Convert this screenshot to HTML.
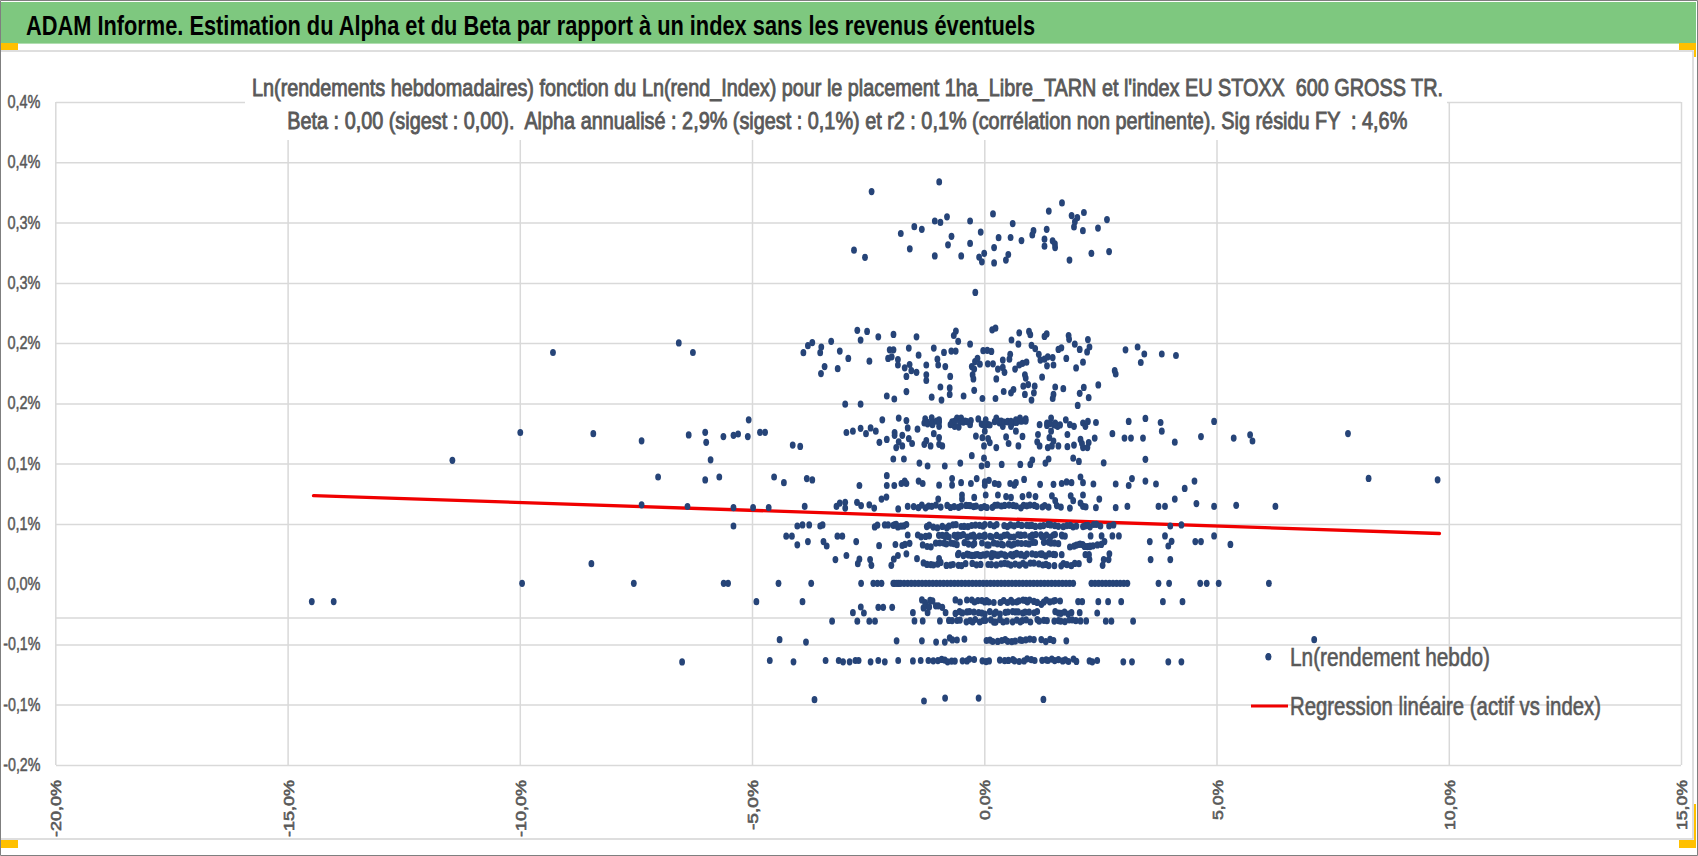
<!DOCTYPE html><html><head><meta charset="utf-8"><style>html,body{margin:0;padding:0;background:#fff;width:1698px;height:856px;overflow:hidden}</style></head><body><svg width="1698" height="856" viewBox="0 0 1698 856" style="display:block"><rect x="0" y="0" width="1698" height="856" fill="#ffffff"/><rect x="1" y="2" width="1695" height="41.6" fill="#7ec87f"/><text x="26" y="34.7" font-family='"Liberation Sans", sans-serif' font-weight="bold" font-size="28" fill="#000" textLength="1009" lengthAdjust="spacingAndGlyphs">ADAM Informe. Estimation du Alpha et du Beta par rapport à un index sans les revenus éventuels</text><path d="M0 51H1693V839H0" fill="none" stroke="#d4d4d4" stroke-width="1.5"/><rect x="0" y="43" width="18" height="7" fill="#ffc000"/><rect x="1679" y="43" width="17" height="7" fill="#ffc000"/><rect x="1694" y="43" width="2" height="14" fill="#ffc000"/><rect x="0" y="840" width="18" height="8" fill="#ffc000"/><rect x="1679" y="840" width="17" height="8" fill="#ffc000"/><rect x="1694" y="804" width="2" height="44" fill="#ffc000"/><path d="M56 102.6H245M1447 102.6H1681M56 162.8H1681M56 223.1H1681M56 283.4H1681M56 343.6H1681M56 403.9H1681M56 464.1H1681M56 524.4H1681M56 618.0H1681M56 644.9H1681M56 705.1H1681M56 765.4H1681M55.8 102V765M288.1 140V765M520.3 140V765M752.5 140V765M984.8 140V765M1217.0 140V765M1449.3 102V765M1681.5 102V765" fill="none" stroke="#d9d9d9" stroke-width="1.5"/><text x="40.5" y="108.0" text-anchor="end" font-family='"Liberation Sans", sans-serif' font-size="18" fill="#595959" stroke="#595959" stroke-width="0.5" textLength="33" lengthAdjust="spacingAndGlyphs">0,4%</text><text x="40.5" y="168.2" text-anchor="end" font-family='"Liberation Sans", sans-serif' font-size="18" fill="#595959" stroke="#595959" stroke-width="0.5" textLength="33" lengthAdjust="spacingAndGlyphs">0,4%</text><text x="40.5" y="228.5" text-anchor="end" font-family='"Liberation Sans", sans-serif' font-size="18" fill="#595959" stroke="#595959" stroke-width="0.5" textLength="33" lengthAdjust="spacingAndGlyphs">0,3%</text><text x="40.5" y="288.8" text-anchor="end" font-family='"Liberation Sans", sans-serif' font-size="18" fill="#595959" stroke="#595959" stroke-width="0.5" textLength="33" lengthAdjust="spacingAndGlyphs">0,3%</text><text x="40.5" y="349.0" text-anchor="end" font-family='"Liberation Sans", sans-serif' font-size="18" fill="#595959" stroke="#595959" stroke-width="0.5" textLength="33" lengthAdjust="spacingAndGlyphs">0,2%</text><text x="40.5" y="409.2" text-anchor="end" font-family='"Liberation Sans", sans-serif' font-size="18" fill="#595959" stroke="#595959" stroke-width="0.5" textLength="33" lengthAdjust="spacingAndGlyphs">0,2%</text><text x="40.5" y="469.5" text-anchor="end" font-family='"Liberation Sans", sans-serif' font-size="18" fill="#595959" stroke="#595959" stroke-width="0.5" textLength="33" lengthAdjust="spacingAndGlyphs">0,1%</text><text x="40.5" y="529.8" text-anchor="end" font-family='"Liberation Sans", sans-serif' font-size="18" fill="#595959" stroke="#595959" stroke-width="0.5" textLength="33" lengthAdjust="spacingAndGlyphs">0,1%</text><text x="40.5" y="590.0" text-anchor="end" font-family='"Liberation Sans", sans-serif' font-size="18" fill="#595959" stroke="#595959" stroke-width="0.5" textLength="33" lengthAdjust="spacingAndGlyphs">0,0%</text><text x="40.5" y="650.2" text-anchor="end" font-family='"Liberation Sans", sans-serif' font-size="18" fill="#595959" stroke="#595959" stroke-width="0.5" textLength="37.3" lengthAdjust="spacingAndGlyphs">-0,1%</text><text x="40.5" y="710.5" text-anchor="end" font-family='"Liberation Sans", sans-serif' font-size="18" fill="#595959" stroke="#595959" stroke-width="0.5" textLength="37.3" lengthAdjust="spacingAndGlyphs">-0,1%</text><text x="40.5" y="770.8" text-anchor="end" font-family='"Liberation Sans", sans-serif' font-size="18" fill="#595959" stroke="#595959" stroke-width="0.5" textLength="37.3" lengthAdjust="spacingAndGlyphs">-0,2%</text><text transform="translate(61.3,780) rotate(-90)" text-anchor="end" font-family='"Liberation Sans", sans-serif' font-size="14.4" fill="#595959" stroke="#595959" stroke-width="0.6" textLength="57" lengthAdjust="spacingAndGlyphs">-20,0%</text><text transform="translate(293.6,780) rotate(-90)" text-anchor="end" font-family='"Liberation Sans", sans-serif' font-size="14.4" fill="#595959" stroke="#595959" stroke-width="0.6" textLength="57" lengthAdjust="spacingAndGlyphs">-15,0%</text><text transform="translate(525.8,780) rotate(-90)" text-anchor="end" font-family='"Liberation Sans", sans-serif' font-size="14.4" fill="#595959" stroke="#595959" stroke-width="0.6" textLength="57" lengthAdjust="spacingAndGlyphs">-10,0%</text><text transform="translate(758.0,780) rotate(-90)" text-anchor="end" font-family='"Liberation Sans", sans-serif' font-size="14.4" fill="#595959" stroke="#595959" stroke-width="0.6" textLength="50" lengthAdjust="spacingAndGlyphs">-5,0%</text><text transform="translate(990.3,780) rotate(-90)" text-anchor="end" font-family='"Liberation Sans", sans-serif' font-size="14.4" fill="#595959" stroke="#595959" stroke-width="0.6" textLength="40" lengthAdjust="spacingAndGlyphs">0,0%</text><text transform="translate(1222.5,780) rotate(-90)" text-anchor="end" font-family='"Liberation Sans", sans-serif' font-size="14.4" fill="#595959" stroke="#595959" stroke-width="0.6" textLength="40" lengthAdjust="spacingAndGlyphs">5,0%</text><text transform="translate(1454.8,780) rotate(-90)" text-anchor="end" font-family='"Liberation Sans", sans-serif' font-size="14.4" fill="#595959" stroke="#595959" stroke-width="0.6" textLength="50" lengthAdjust="spacingAndGlyphs">10,0%</text><text transform="translate(1687.0,780) rotate(-90)" text-anchor="end" font-family='"Liberation Sans", sans-serif' font-size="14.4" fill="#595959" stroke="#595959" stroke-width="0.6" textLength="50" lengthAdjust="spacingAndGlyphs">15,0%</text><text x="252" y="95.8" stroke="#595959" stroke-width="0.9" font-family='"Liberation Sans", sans-serif' font-size="24.5" fill="#595959" textLength="1191" style="white-space:pre" lengthAdjust="spacingAndGlyphs">Ln(rendements hebdomadaires) fonction du Ln(rend_Index) pour le placement 1ha_Libre_TARN et l'index EU STOXX  600 GROSS TR.</text><text x="287.3" y="128.7" stroke="#595959" stroke-width="0.9" font-family='"Liberation Sans", sans-serif' font-size="24.5" fill="#595959" textLength="1120" style="white-space:pre" lengthAdjust="spacingAndGlyphs">Beta : 0,00 (sigest : 0,00).  Alpha annualisé : 2,9% (sigest : 0,1%) et r2 : 0,1% (corrélation non pertinente). Sig résidu FY  : 4,6%</text><line x1="313.5" y1="495.6" x2="1439.5" y2="533.5" stroke="#f00000" stroke-width="3.3" stroke-linecap="round"/><g fill="#264478"><ellipse cx="553.0" cy="352.5" rx="2.9" ry="3.6"/><ellipse cx="678.8" cy="342.9" rx="2.9" ry="3.6"/><ellipse cx="692.9" cy="352.5" rx="2.9" ry="3.6"/><ellipse cx="520.3" cy="432.5" rx="2.9" ry="3.6"/><ellipse cx="593.3" cy="433.7" rx="2.9" ry="3.6"/><ellipse cx="641.6" cy="440.8" rx="2.9" ry="3.6"/><ellipse cx="688.7" cy="434.9" rx="2.9" ry="3.6"/><ellipse cx="452.4" cy="460.3" rx="2.9" ry="3.6"/><ellipse cx="658.1" cy="477.0" rx="2.9" ry="3.6"/><ellipse cx="641.6" cy="504.8" rx="2.9" ry="3.6"/><ellipse cx="687.5" cy="506.5" rx="2.9" ry="3.6"/><ellipse cx="591.4" cy="563.7" rx="2.9" ry="3.6"/><ellipse cx="522.1" cy="583.3" rx="2.9" ry="3.6"/><ellipse cx="633.8" cy="583.3" rx="2.9" ry="3.6"/><ellipse cx="311.8" cy="601.6" rx="2.9" ry="3.6"/><ellipse cx="333.7" cy="601.6" rx="2.9" ry="3.6"/><ellipse cx="682.1" cy="661.9" rx="2.9" ry="3.6"/><ellipse cx="939.2" cy="181.9" rx="2.9" ry="3.6"/><ellipse cx="871.6" cy="191.6" rx="2.9" ry="3.6"/><ellipse cx="1062.0" cy="202.9" rx="2.9" ry="3.6"/><ellipse cx="1048.8" cy="211.1" rx="2.9" ry="3.6"/><ellipse cx="993.0" cy="213.9" rx="2.9" ry="3.6"/><ellipse cx="1083.9" cy="212.5" rx="2.9" ry="3.6"/><ellipse cx="1071.6" cy="215.6" rx="2.9" ry="3.6"/><ellipse cx="1077.3" cy="217.7" rx="2.9" ry="3.6"/><ellipse cx="1074.9" cy="221.7" rx="2.9" ry="3.6"/><ellipse cx="1107.0" cy="219.6" rx="2.9" ry="3.6"/><ellipse cx="947.0" cy="216.8" rx="2.9" ry="3.6"/><ellipse cx="934.8" cy="221.0" rx="2.9" ry="3.6"/><ellipse cx="940.4" cy="222.4" rx="2.9" ry="3.6"/><ellipse cx="970.1" cy="221.0" rx="2.9" ry="3.6"/><ellipse cx="1012.7" cy="223.6" rx="2.9" ry="3.6"/><ellipse cx="914.3" cy="226.7" rx="2.9" ry="3.6"/><ellipse cx="921.8" cy="229.3" rx="2.9" ry="3.6"/><ellipse cx="1033.5" cy="230.7" rx="2.9" ry="3.6"/><ellipse cx="1046.7" cy="229.3" rx="2.9" ry="3.6"/><ellipse cx="1074.0" cy="226.9" rx="2.9" ry="3.6"/><ellipse cx="1082.9" cy="230.7" rx="2.9" ry="3.6"/><ellipse cx="1098.0" cy="228.1" rx="2.9" ry="3.6"/><ellipse cx="900.8" cy="233.5" rx="2.9" ry="3.6"/><ellipse cx="980.7" cy="232.1" rx="2.9" ry="3.6"/><ellipse cx="1032.3" cy="234.9" rx="2.9" ry="3.6"/><ellipse cx="951.5" cy="236.3" rx="2.9" ry="3.6"/><ellipse cx="998.6" cy="237.7" rx="2.9" ry="3.6"/><ellipse cx="1010.6" cy="237.5" rx="2.9" ry="3.6"/><ellipse cx="1044.5" cy="239.2" rx="2.9" ry="3.6"/><ellipse cx="1021.5" cy="240.6" rx="2.9" ry="3.6"/><ellipse cx="1052.6" cy="240.8" rx="2.9" ry="3.6"/><ellipse cx="1054.9" cy="243.9" rx="2.9" ry="3.6"/><ellipse cx="1055.1" cy="247.6" rx="2.9" ry="3.6"/><ellipse cx="1044.5" cy="246.2" rx="2.9" ry="3.6"/><ellipse cx="854.0" cy="250.2" rx="2.9" ry="3.6"/><ellipse cx="865.0" cy="257.3" rx="2.9" ry="3.6"/><ellipse cx="909.8" cy="248.8" rx="2.9" ry="3.6"/><ellipse cx="948.0" cy="244.8" rx="2.9" ry="3.6"/><ellipse cx="970.1" cy="243.4" rx="2.9" ry="3.6"/><ellipse cx="994.1" cy="247.6" rx="2.9" ry="3.6"/><ellipse cx="1008.3" cy="254.5" rx="2.9" ry="3.6"/><ellipse cx="1005.9" cy="260.1" rx="2.9" ry="3.6"/><ellipse cx="984.2" cy="253.3" rx="2.9" ry="3.6"/><ellipse cx="979.1" cy="257.1" rx="2.9" ry="3.6"/><ellipse cx="981.9" cy="261.8" rx="2.9" ry="3.6"/><ellipse cx="994.1" cy="262.9" rx="2.9" ry="3.6"/><ellipse cx="961.2" cy="255.9" rx="2.9" ry="3.6"/><ellipse cx="934.8" cy="255.9" rx="2.9" ry="3.6"/><ellipse cx="1069.5" cy="260.1" rx="2.9" ry="3.6"/><ellipse cx="1091.4" cy="253.3" rx="2.9" ry="3.6"/><ellipse cx="1109.1" cy="251.6" rx="2.9" ry="3.6"/><ellipse cx="975.3" cy="292.4" rx="2.9" ry="3.6"/><ellipse cx="857.3" cy="330.3" rx="2.9" ry="3.6"/><ellipse cx="867.1" cy="331.4" rx="2.9" ry="3.6"/><ellipse cx="860.6" cy="340.1" rx="2.9" ry="3.6"/><ellipse cx="878.3" cy="336.8" rx="2.9" ry="3.6"/><ellipse cx="893.5" cy="334.4" rx="2.9" ry="3.6"/><ellipse cx="812.3" cy="342.6" rx="2.9" ry="3.6"/><ellipse cx="807.9" cy="345.7" rx="2.9" ry="3.6"/><ellipse cx="831.2" cy="341.3" rx="2.9" ry="3.6"/><ellipse cx="821.3" cy="347.0" rx="2.9" ry="3.6"/><ellipse cx="820.2" cy="352.7" rx="2.9" ry="3.6"/><ellipse cx="803.4" cy="352.7" rx="2.9" ry="3.6"/><ellipse cx="839.8" cy="351.1" rx="2.9" ry="3.6"/><ellipse cx="848.3" cy="358.4" rx="2.9" ry="3.6"/><ellipse cx="869.4" cy="361.2" rx="2.9" ry="3.6"/><ellipse cx="889.7" cy="349.8" rx="2.9" ry="3.6"/><ellipse cx="893.5" cy="349.8" rx="2.9" ry="3.6"/><ellipse cx="888.1" cy="358.4" rx="2.9" ry="3.6"/><ellipse cx="891.7" cy="356.8" rx="2.9" ry="3.6"/><ellipse cx="897.9" cy="359.6" rx="2.9" ry="3.6"/><ellipse cx="897.9" cy="365.0" rx="2.9" ry="3.6"/><ellipse cx="824.6" cy="366.6" rx="2.9" ry="3.6"/><ellipse cx="837.7" cy="368.7" rx="2.9" ry="3.6"/><ellipse cx="821.0" cy="373.6" rx="2.9" ry="3.6"/><ellipse cx="886.8" cy="396.0" rx="2.9" ry="3.6"/><ellipse cx="894.3" cy="399.0" rx="2.9" ry="3.6"/><ellipse cx="845.2" cy="404.2" rx="2.9" ry="3.6"/><ellipse cx="860.6" cy="404.2" rx="2.9" ry="3.6"/><ellipse cx="748.7" cy="419.8" rx="2.9" ry="3.6"/><ellipse cx="705.2" cy="432.3" rx="2.9" ry="3.6"/><ellipse cx="706.2" cy="442.3" rx="2.9" ry="3.6"/><ellipse cx="723.4" cy="436.6" rx="2.9" ry="3.6"/><ellipse cx="733.5" cy="435.3" rx="2.9" ry="3.6"/><ellipse cx="738.1" cy="434.0" rx="2.9" ry="3.6"/><ellipse cx="747.8" cy="436.6" rx="2.9" ry="3.6"/><ellipse cx="760.0" cy="432.3" rx="2.9" ry="3.6"/><ellipse cx="765.1" cy="432.3" rx="2.9" ry="3.6"/><ellipse cx="792.7" cy="445.1" rx="2.9" ry="3.6"/><ellipse cx="800.2" cy="446.4" rx="2.9" ry="3.6"/><ellipse cx="710.6" cy="459.8" rx="2.9" ry="3.6"/><ellipse cx="882.3" cy="419.8" rx="2.9" ry="3.6"/><ellipse cx="898.7" cy="418.1" rx="2.9" ry="3.6"/><ellipse cx="846.4" cy="432.5" rx="2.9" ry="3.6"/><ellipse cx="852.9" cy="431.2" rx="2.9" ry="3.6"/><ellipse cx="860.6" cy="428.3" rx="2.9" ry="3.6"/><ellipse cx="866.0" cy="433.7" rx="2.9" ry="3.6"/><ellipse cx="870.6" cy="427.9" rx="2.9" ry="3.6"/><ellipse cx="875.8" cy="431.2" rx="2.9" ry="3.6"/><ellipse cx="894.6" cy="432.5" rx="2.9" ry="3.6"/><ellipse cx="894.6" cy="435.3" rx="2.9" ry="3.6"/><ellipse cx="879.4" cy="442.3" rx="2.9" ry="3.6"/><ellipse cx="886.8" cy="439.4" rx="2.9" ry="3.6"/><ellipse cx="898.7" cy="441.8" rx="2.9" ry="3.6"/><ellipse cx="896.2" cy="447.6" rx="2.9" ry="3.6"/><ellipse cx="893.3" cy="459.0" rx="2.9" ry="3.6"/><ellipse cx="916.5" cy="336.8" rx="2.9" ry="3.6"/><ellipse cx="953.8" cy="335.5" rx="2.9" ry="3.6"/><ellipse cx="955.9" cy="331.1" rx="2.9" ry="3.6"/><ellipse cx="958.2" cy="341.3" rx="2.9" ry="3.6"/><ellipse cx="970.1" cy="344.2" rx="2.9" ry="3.6"/><ellipse cx="992.2" cy="329.8" rx="2.9" ry="3.6"/><ellipse cx="995.5" cy="328.2" rx="2.9" ry="3.6"/><ellipse cx="1011.5" cy="340.0" rx="2.9" ry="3.6"/><ellipse cx="1019.2" cy="332.8" rx="2.9" ry="3.6"/><ellipse cx="1018.4" cy="344.2" rx="2.9" ry="3.6"/><ellipse cx="1029.0" cy="331.4" rx="2.9" ry="3.6"/><ellipse cx="1030.3" cy="334.7" rx="2.9" ry="3.6"/><ellipse cx="1044.5" cy="336.4" rx="2.9" ry="3.6"/><ellipse cx="1046.7" cy="333.9" rx="2.9" ry="3.6"/><ellipse cx="1068.6" cy="335.5" rx="2.9" ry="3.6"/><ellipse cx="1069.1" cy="339.3" rx="2.9" ry="3.6"/><ellipse cx="1074.8" cy="344.2" rx="2.9" ry="3.6"/><ellipse cx="1087.9" cy="339.6" rx="2.9" ry="3.6"/><ellipse cx="908.8" cy="348.1" rx="2.9" ry="3.6"/><ellipse cx="918.6" cy="355.2" rx="2.9" ry="3.6"/><ellipse cx="933.8" cy="348.1" rx="2.9" ry="3.6"/><ellipse cx="944.0" cy="352.4" rx="2.9" ry="3.6"/><ellipse cx="951.3" cy="351.1" rx="2.9" ry="3.6"/><ellipse cx="955.7" cy="351.1" rx="2.9" ry="3.6"/><ellipse cx="904.7" cy="367.8" rx="2.9" ry="3.6"/><ellipse cx="909.6" cy="364.5" rx="2.9" ry="3.6"/><ellipse cx="911.3" cy="370.7" rx="2.9" ry="3.6"/><ellipse cx="916.5" cy="372.3" rx="2.9" ry="3.6"/><ellipse cx="906.4" cy="376.4" rx="2.9" ry="3.6"/><ellipse cx="926.3" cy="365.0" rx="2.9" ry="3.6"/><ellipse cx="926.3" cy="374.8" rx="2.9" ry="3.6"/><ellipse cx="926.3" cy="380.5" rx="2.9" ry="3.6"/><ellipse cx="937.4" cy="359.2" rx="2.9" ry="3.6"/><ellipse cx="938.2" cy="365.0" rx="2.9" ry="3.6"/><ellipse cx="945.3" cy="366.6" rx="2.9" ry="3.6"/><ellipse cx="950.2" cy="376.4" rx="2.9" ry="3.6"/><ellipse cx="971.8" cy="366.6" rx="2.9" ry="3.6"/><ellipse cx="972.6" cy="374.8" rx="2.9" ry="3.6"/><ellipse cx="974.2" cy="369.1" rx="2.9" ry="3.6"/><ellipse cx="973.4" cy="378.9" rx="2.9" ry="3.6"/><ellipse cx="975.0" cy="361.7" rx="2.9" ry="3.6"/><ellipse cx="977.5" cy="358.4" rx="2.9" ry="3.6"/><ellipse cx="979.9" cy="364.2" rx="2.9" ry="3.6"/><ellipse cx="983.2" cy="350.7" rx="2.9" ry="3.6"/><ellipse cx="987.3" cy="350.3" rx="2.9" ry="3.6"/><ellipse cx="991.4" cy="351.4" rx="2.9" ry="3.6"/><ellipse cx="987.8" cy="363.8" rx="2.9" ry="3.6"/><ellipse cx="993.0" cy="363.8" rx="2.9" ry="3.6"/><ellipse cx="1002.8" cy="360.1" rx="2.9" ry="3.6"/><ellipse cx="997.9" cy="369.1" rx="2.9" ry="3.6"/><ellipse cx="1002.8" cy="367.4" rx="2.9" ry="3.6"/><ellipse cx="1004.5" cy="372.3" rx="2.9" ry="3.6"/><ellipse cx="1010.2" cy="354.3" rx="2.9" ry="3.6"/><ellipse cx="1009.4" cy="359.2" rx="2.9" ry="3.6"/><ellipse cx="1015.1" cy="369.1" rx="2.9" ry="3.6"/><ellipse cx="1019.2" cy="365.0" rx="2.9" ry="3.6"/><ellipse cx="1022.5" cy="363.3" rx="2.9" ry="3.6"/><ellipse cx="1026.5" cy="362.2" rx="2.9" ry="3.6"/><ellipse cx="996.3" cy="378.9" rx="2.9" ry="3.6"/><ellipse cx="1024.9" cy="374.8" rx="2.9" ry="3.6"/><ellipse cx="1025.7" cy="378.1" rx="2.9" ry="3.6"/><ellipse cx="1031.5" cy="345.3" rx="2.9" ry="3.6"/><ellipse cx="1035.2" cy="348.6" rx="2.9" ry="3.6"/><ellipse cx="1038.8" cy="354.3" rx="2.9" ry="3.6"/><ellipse cx="1040.4" cy="360.1" rx="2.9" ry="3.6"/><ellipse cx="1044.5" cy="359.2" rx="2.9" ry="3.6"/><ellipse cx="1047.8" cy="356.8" rx="2.9" ry="3.6"/><ellipse cx="1052.7" cy="357.6" rx="2.9" ry="3.6"/><ellipse cx="1047.0" cy="365.8" rx="2.9" ry="3.6"/><ellipse cx="1053.5" cy="365.0" rx="2.9" ry="3.6"/><ellipse cx="1058.4" cy="349.4" rx="2.9" ry="3.6"/><ellipse cx="1061.4" cy="347.8" rx="2.9" ry="3.6"/><ellipse cx="1066.3" cy="358.4" rx="2.9" ry="3.6"/><ellipse cx="1079.7" cy="349.4" rx="2.9" ry="3.6"/><ellipse cx="1083.0" cy="362.2" rx="2.9" ry="3.6"/><ellipse cx="1076.1" cy="367.9" rx="2.9" ry="3.6"/><ellipse cx="1087.1" cy="351.9" rx="2.9" ry="3.6"/><ellipse cx="1042.1" cy="377.2" rx="2.9" ry="3.6"/><ellipse cx="906.4" cy="391.6" rx="2.9" ry="3.6"/><ellipse cx="931.7" cy="397.2" rx="2.9" ry="3.6"/><ellipse cx="941.5" cy="400.1" rx="2.9" ry="3.6"/><ellipse cx="940.4" cy="387.0" rx="2.9" ry="3.6"/><ellipse cx="949.7" cy="387.9" rx="2.9" ry="3.6"/><ellipse cx="949.7" cy="394.4" rx="2.9" ry="3.6"/><ellipse cx="963.6" cy="396.0" rx="2.9" ry="3.6"/><ellipse cx="974.2" cy="390.3" rx="2.9" ry="3.6"/><ellipse cx="982.4" cy="398.5" rx="2.9" ry="3.6"/><ellipse cx="995.5" cy="398.5" rx="2.9" ry="3.6"/><ellipse cx="1003.7" cy="391.5" rx="2.9" ry="3.6"/><ellipse cx="1011.0" cy="392.8" rx="2.9" ry="3.6"/><ellipse cx="1013.5" cy="389.5" rx="2.9" ry="3.6"/><ellipse cx="1023.3" cy="386.2" rx="2.9" ry="3.6"/><ellipse cx="1028.2" cy="384.6" rx="2.9" ry="3.6"/><ellipse cx="1034.7" cy="386.2" rx="2.9" ry="3.6"/><ellipse cx="1033.9" cy="392.8" rx="2.9" ry="3.6"/><ellipse cx="1024.9" cy="394.4" rx="2.9" ry="3.6"/><ellipse cx="1031.5" cy="400.1" rx="2.9" ry="3.6"/><ellipse cx="1055.2" cy="387.0" rx="2.9" ry="3.6"/><ellipse cx="1063.3" cy="388.7" rx="2.9" ry="3.6"/><ellipse cx="1053.5" cy="394.4" rx="2.9" ry="3.6"/><ellipse cx="1052.7" cy="398.5" rx="2.9" ry="3.6"/><ellipse cx="1079.7" cy="393.3" rx="2.9" ry="3.6"/><ellipse cx="1083.8" cy="387.4" rx="2.9" ry="3.6"/><ellipse cx="1088.7" cy="397.7" rx="2.9" ry="3.6"/><ellipse cx="1077.7" cy="405.4" rx="2.9" ry="3.6"/><ellipse cx="906.4" cy="420.6" rx="2.9" ry="3.6"/><ellipse cx="907.7" cy="427.9" rx="2.9" ry="3.6"/><ellipse cx="917.5" cy="429.2" rx="2.9" ry="3.6"/><ellipse cx="902.3" cy="435.3" rx="2.9" ry="3.6"/><ellipse cx="908.8" cy="438.6" rx="2.9" ry="3.6"/><ellipse cx="912.1" cy="443.5" rx="2.9" ry="3.6"/><ellipse cx="902.3" cy="445.9" rx="2.9" ry="3.6"/><ellipse cx="925.2" cy="418.9" rx="2.9" ry="3.6"/><ellipse cx="931.7" cy="417.8" rx="2.9" ry="3.6"/><ellipse cx="939.1" cy="419.8" rx="2.9" ry="3.6"/><ellipse cx="927.6" cy="423.8" rx="2.9" ry="3.6"/><ellipse cx="932.5" cy="424.7" rx="2.9" ry="3.6"/><ellipse cx="939.1" cy="426.3" rx="2.9" ry="3.6"/><ellipse cx="933.8" cy="433.7" rx="2.9" ry="3.6"/><ellipse cx="939.1" cy="437.7" rx="2.9" ry="3.6"/><ellipse cx="926.3" cy="440.7" rx="2.9" ry="3.6"/><ellipse cx="924.3" cy="444.3" rx="2.9" ry="3.6"/><ellipse cx="930.6" cy="445.9" rx="2.9" ry="3.6"/><ellipse cx="939.1" cy="444.3" rx="2.9" ry="3.6"/><ellipse cx="942.3" cy="445.9" rx="2.9" ry="3.6"/><ellipse cx="950.5" cy="424.7" rx="2.9" ry="3.6"/><ellipse cx="954.6" cy="426.3" rx="2.9" ry="3.6"/><ellipse cx="958.7" cy="427.1" rx="2.9" ry="3.6"/><ellipse cx="957.0" cy="418.1" rx="2.9" ry="3.6"/><ellipse cx="961.1" cy="418.1" rx="2.9" ry="3.6"/><ellipse cx="965.2" cy="421.1" rx="2.9" ry="3.6"/><ellipse cx="970.9" cy="420.6" rx="2.9" ry="3.6"/><ellipse cx="970.1" cy="424.7" rx="2.9" ry="3.6"/><ellipse cx="978.3" cy="418.9" rx="2.9" ry="3.6"/><ellipse cx="983.2" cy="424.7" rx="2.9" ry="3.6"/><ellipse cx="988.1" cy="424.7" rx="2.9" ry="3.6"/><ellipse cx="985.7" cy="419.8" rx="2.9" ry="3.6"/><ellipse cx="984.8" cy="431.2" rx="2.9" ry="3.6"/><ellipse cx="975.9" cy="436.1" rx="2.9" ry="3.6"/><ellipse cx="982.4" cy="437.7" rx="2.9" ry="3.6"/><ellipse cx="988.1" cy="438.6" rx="2.9" ry="3.6"/><ellipse cx="989.8" cy="442.6" rx="2.9" ry="3.6"/><ellipse cx="984.0" cy="445.9" rx="2.9" ry="3.6"/><ellipse cx="996.3" cy="447.6" rx="2.9" ry="3.6"/><ellipse cx="971.8" cy="455.7" rx="2.9" ry="3.6"/><ellipse cx="996.3" cy="418.1" rx="2.9" ry="3.6"/><ellipse cx="999.6" cy="423.0" rx="2.9" ry="3.6"/><ellipse cx="1002.8" cy="426.3" rx="2.9" ry="3.6"/><ellipse cx="1007.7" cy="421.4" rx="2.9" ry="3.6"/><ellipse cx="1012.6" cy="423.0" rx="2.9" ry="3.6"/><ellipse cx="1015.9" cy="419.8" rx="2.9" ry="3.6"/><ellipse cx="1020.0" cy="418.1" rx="2.9" ry="3.6"/><ellipse cx="1025.7" cy="418.9" rx="2.9" ry="3.6"/><ellipse cx="1011.0" cy="426.3" rx="2.9" ry="3.6"/><ellipse cx="1015.9" cy="431.2" rx="2.9" ry="3.6"/><ellipse cx="1006.1" cy="436.9" rx="2.9" ry="3.6"/><ellipse cx="1008.6" cy="443.5" rx="2.9" ry="3.6"/><ellipse cx="1022.5" cy="436.4" rx="2.9" ry="3.6"/><ellipse cx="1018.4" cy="445.9" rx="2.9" ry="3.6"/><ellipse cx="1039.6" cy="424.7" rx="2.9" ry="3.6"/><ellipse cx="1038.0" cy="434.5" rx="2.9" ry="3.6"/><ellipse cx="1037.2" cy="441.8" rx="2.9" ry="3.6"/><ellipse cx="1039.6" cy="445.9" rx="2.9" ry="3.6"/><ellipse cx="1047.0" cy="423.0" rx="2.9" ry="3.6"/><ellipse cx="1051.1" cy="418.1" rx="2.9" ry="3.6"/><ellipse cx="1055.2" cy="423.0" rx="2.9" ry="3.6"/><ellipse cx="1057.6" cy="426.3" rx="2.9" ry="3.6"/><ellipse cx="1051.1" cy="431.2" rx="2.9" ry="3.6"/><ellipse cx="1049.4" cy="437.7" rx="2.9" ry="3.6"/><ellipse cx="1053.5" cy="441.0" rx="2.9" ry="3.6"/><ellipse cx="1047.8" cy="447.6" rx="2.9" ry="3.6"/><ellipse cx="1051.9" cy="445.9" rx="2.9" ry="3.6"/><ellipse cx="1058.4" cy="445.9" rx="2.9" ry="3.6"/><ellipse cx="1065.8" cy="419.8" rx="2.9" ry="3.6"/><ellipse cx="1069.9" cy="424.7" rx="2.9" ry="3.6"/><ellipse cx="1074.0" cy="426.3" rx="2.9" ry="3.6"/><ellipse cx="1067.4" cy="434.5" rx="2.9" ry="3.6"/><ellipse cx="1067.4" cy="446.7" rx="2.9" ry="3.6"/><ellipse cx="1074.0" cy="445.1" rx="2.9" ry="3.6"/><ellipse cx="1080.5" cy="439.4" rx="2.9" ry="3.6"/><ellipse cx="1083.0" cy="423.0" rx="2.9" ry="3.6"/><ellipse cx="1085.4" cy="426.3" rx="2.9" ry="3.6"/><ellipse cx="1087.9" cy="421.4" rx="2.9" ry="3.6"/><ellipse cx="1088.7" cy="442.6" rx="2.9" ry="3.6"/><ellipse cx="1083.0" cy="447.6" rx="2.9" ry="3.6"/><ellipse cx="903.9" cy="459.0" rx="2.9" ry="3.6"/><ellipse cx="984.0" cy="458.2" rx="2.9" ry="3.6"/><ellipse cx="1032.3" cy="460.0" rx="2.9" ry="3.6"/><ellipse cx="1048.6" cy="459.0" rx="2.9" ry="3.6"/><ellipse cx="1073.2" cy="458.2" rx="2.9" ry="3.6"/><ellipse cx="994.7" cy="421.7" rx="2.9" ry="3.6"/><ellipse cx="998.5" cy="421.0" rx="2.9" ry="3.6"/><ellipse cx="1001.2" cy="421.0" rx="2.9" ry="3.6"/><ellipse cx="1003.9" cy="422.0" rx="2.9" ry="3.6"/><ellipse cx="1007.5" cy="422.0" rx="2.9" ry="3.6"/><ellipse cx="1011.0" cy="421.4" rx="2.9" ry="3.6"/><ellipse cx="1016.4" cy="422.4" rx="2.9" ry="3.6"/><ellipse cx="1020.0" cy="420.9" rx="2.9" ry="3.6"/><ellipse cx="1021.8" cy="421.2" rx="2.9" ry="3.6"/><ellipse cx="1025.7" cy="421.1" rx="2.9" ry="3.6"/><ellipse cx="981.6" cy="424.1" rx="2.9" ry="3.6"/><ellipse cx="984.9" cy="424.9" rx="2.9" ry="3.6"/><ellipse cx="989.8" cy="425.0" rx="2.9" ry="3.6"/><ellipse cx="952.1" cy="421.9" rx="2.9" ry="3.6"/><ellipse cx="954.8" cy="421.0" rx="2.9" ry="3.6"/><ellipse cx="959.9" cy="422.0" rx="2.9" ry="3.6"/><ellipse cx="963.4" cy="422.1" rx="2.9" ry="3.6"/><ellipse cx="966.9" cy="421.6" rx="2.9" ry="3.6"/><ellipse cx="924.3" cy="423.0" rx="2.9" ry="3.6"/><ellipse cx="927.4" cy="422.4" rx="2.9" ry="3.6"/><ellipse cx="932.6" cy="422.9" rx="2.9" ry="3.6"/><ellipse cx="936.5" cy="421.1" rx="2.9" ry="3.6"/><ellipse cx="939.1" cy="422.0" rx="2.9" ry="3.6"/><ellipse cx="1047.0" cy="425.4" rx="2.9" ry="3.6"/><ellipse cx="1050.2" cy="423.4" rx="2.9" ry="3.6"/><ellipse cx="1054.2" cy="424.9" rx="2.9" ry="3.6"/><ellipse cx="1056.4" cy="425.2" rx="2.9" ry="3.6"/><ellipse cx="1060.1" cy="424.9" rx="2.9" ry="3.6"/><ellipse cx="1089.5" cy="347.0" rx="2.9" ry="3.6"/><ellipse cx="1125.5" cy="349.8" rx="2.9" ry="3.6"/><ellipse cx="1137.6" cy="347.0" rx="2.9" ry="3.6"/><ellipse cx="1144.3" cy="354.0" rx="2.9" ry="3.6"/><ellipse cx="1161.8" cy="354.0" rx="2.9" ry="3.6"/><ellipse cx="1176.0" cy="355.5" rx="2.9" ry="3.6"/><ellipse cx="1140.8" cy="362.5" rx="2.9" ry="3.6"/><ellipse cx="1114.7" cy="370.7" rx="2.9" ry="3.6"/><ellipse cx="1115.7" cy="374.0" rx="2.9" ry="3.6"/><ellipse cx="1098.3" cy="384.9" rx="2.9" ry="3.6"/><ellipse cx="1096.0" cy="422.5" rx="2.9" ry="3.6"/><ellipse cx="1128.7" cy="421.4" rx="2.9" ry="3.6"/><ellipse cx="1145.4" cy="418.4" rx="2.9" ry="3.6"/><ellipse cx="1160.6" cy="422.5" rx="2.9" ry="3.6"/><ellipse cx="1161.8" cy="431.2" rx="2.9" ry="3.6"/><ellipse cx="1214.1" cy="421.4" rx="2.9" ry="3.6"/><ellipse cx="1112.4" cy="433.7" rx="2.9" ry="3.6"/><ellipse cx="1124.5" cy="438.1" rx="2.9" ry="3.6"/><ellipse cx="1131.0" cy="438.1" rx="2.9" ry="3.6"/><ellipse cx="1143.0" cy="438.1" rx="2.9" ry="3.6"/><ellipse cx="1094.7" cy="438.1" rx="2.9" ry="3.6"/><ellipse cx="1082.0" cy="443.5" rx="2.9" ry="3.6"/><ellipse cx="1087.4" cy="447.6" rx="2.9" ry="3.6"/><ellipse cx="1174.8" cy="442.2" rx="2.9" ry="3.6"/><ellipse cx="1201.0" cy="436.6" rx="2.9" ry="3.6"/><ellipse cx="1233.7" cy="438.1" rx="2.9" ry="3.6"/><ellipse cx="1250.1" cy="434.8" rx="2.9" ry="3.6"/><ellipse cx="1252.5" cy="441.0" rx="2.9" ry="3.6"/><ellipse cx="1145.4" cy="459.3" rx="2.9" ry="3.6"/><ellipse cx="705.2" cy="479.9" rx="2.9" ry="3.6"/><ellipse cx="719.3" cy="477.0" rx="2.9" ry="3.6"/><ellipse cx="774.1" cy="477.0" rx="2.9" ry="3.6"/><ellipse cx="783.9" cy="482.7" rx="2.9" ry="3.6"/><ellipse cx="806.8" cy="478.6" rx="2.9" ry="3.6"/><ellipse cx="812.3" cy="479.9" rx="2.9" ry="3.6"/><ellipse cx="859.4" cy="485.5" rx="2.9" ry="3.6"/><ellipse cx="886.8" cy="475.7" rx="2.9" ry="3.6"/><ellipse cx="886.8" cy="485.5" rx="2.9" ry="3.6"/><ellipse cx="894.3" cy="485.5" rx="2.9" ry="3.6"/><ellipse cx="733.5" cy="507.6" rx="2.9" ry="3.6"/><ellipse cx="753.1" cy="507.6" rx="2.9" ry="3.6"/><ellipse cx="768.7" cy="507.6" rx="2.9" ry="3.6"/><ellipse cx="804.7" cy="506.4" rx="2.9" ry="3.6"/><ellipse cx="836.5" cy="506.4" rx="2.9" ry="3.6"/><ellipse cx="839.8" cy="503.1" rx="2.9" ry="3.6"/><ellipse cx="845.2" cy="502.3" rx="2.9" ry="3.6"/><ellipse cx="845.2" cy="508.1" rx="2.9" ry="3.6"/><ellipse cx="857.0" cy="502.3" rx="2.9" ry="3.6"/><ellipse cx="861.1" cy="505.6" rx="2.9" ry="3.6"/><ellipse cx="869.3" cy="504.8" rx="2.9" ry="3.6"/><ellipse cx="874.2" cy="508.1" rx="2.9" ry="3.6"/><ellipse cx="881.5" cy="499.1" rx="2.9" ry="3.6"/><ellipse cx="886.4" cy="497.1" rx="2.9" ry="3.6"/><ellipse cx="898.2" cy="508.9" rx="2.9" ry="3.6"/><ellipse cx="733.5" cy="526.0" rx="2.9" ry="3.6"/><ellipse cx="797.3" cy="526.0" rx="2.9" ry="3.6"/><ellipse cx="802.5" cy="524.9" rx="2.9" ry="3.6"/><ellipse cx="809.2" cy="524.9" rx="2.9" ry="3.6"/><ellipse cx="820.2" cy="526.0" rx="2.9" ry="3.6"/><ellipse cx="822.6" cy="524.9" rx="2.9" ry="3.6"/><ellipse cx="874.7" cy="526.9" rx="2.9" ry="3.6"/><ellipse cx="877.4" cy="525.2" rx="2.9" ry="3.6"/><ellipse cx="884.8" cy="524.9" rx="2.9" ry="3.6"/><ellipse cx="888.1" cy="524.9" rx="2.9" ry="3.6"/><ellipse cx="894.6" cy="524.9" rx="2.9" ry="3.6"/><ellipse cx="897.9" cy="526.9" rx="2.9" ry="3.6"/><ellipse cx="786.2" cy="536.2" rx="2.9" ry="3.6"/><ellipse cx="791.9" cy="536.2" rx="2.9" ry="3.6"/><ellipse cx="797.3" cy="544.8" rx="2.9" ry="3.6"/><ellipse cx="807.9" cy="541.6" rx="2.9" ry="3.6"/><ellipse cx="823.5" cy="541.6" rx="2.9" ry="3.6"/><ellipse cx="826.7" cy="546.0" rx="2.9" ry="3.6"/><ellipse cx="837.4" cy="536.2" rx="2.9" ry="3.6"/><ellipse cx="842.3" cy="536.2" rx="2.9" ry="3.6"/><ellipse cx="856.2" cy="541.6" rx="2.9" ry="3.6"/><ellipse cx="879.1" cy="545.7" rx="2.9" ry="3.6"/><ellipse cx="895.4" cy="544.5" rx="2.9" ry="3.6"/><ellipse cx="835.4" cy="559.6" rx="2.9" ry="3.6"/><ellipse cx="846.4" cy="555.5" rx="2.9" ry="3.6"/><ellipse cx="857.8" cy="563.7" rx="2.9" ry="3.6"/><ellipse cx="859.4" cy="559.2" rx="2.9" ry="3.6"/><ellipse cx="870.1" cy="559.6" rx="2.9" ry="3.6"/><ellipse cx="871.4" cy="565.3" rx="2.9" ry="3.6"/><ellipse cx="891.3" cy="565.3" rx="2.9" ry="3.6"/><ellipse cx="893.8" cy="559.2" rx="2.9" ry="3.6"/><ellipse cx="897.9" cy="555.5" rx="2.9" ry="3.6"/><ellipse cx="723.7" cy="583.3" rx="2.9" ry="3.6"/><ellipse cx="728.1" cy="583.3" rx="2.9" ry="3.6"/><ellipse cx="778.5" cy="583.3" rx="2.9" ry="3.6"/><ellipse cx="811.2" cy="583.3" rx="2.9" ry="3.6"/><ellipse cx="861.1" cy="583.3" rx="2.9" ry="3.6"/><ellipse cx="873.3" cy="583.3" rx="2.9" ry="3.6"/><ellipse cx="877.4" cy="583.3" rx="2.9" ry="3.6"/><ellipse cx="881.5" cy="583.3" rx="2.9" ry="3.6"/><ellipse cx="894.6" cy="583.3" rx="2.9" ry="3.6"/><ellipse cx="898.7" cy="583.3" rx="2.9" ry="3.6"/><ellipse cx="913.7" cy="506.6" rx="2.9" ry="3.6"/><ellipse cx="918.4" cy="507.7" rx="2.9" ry="3.6"/><ellipse cx="921.8" cy="505.2" rx="2.9" ry="3.6"/><ellipse cx="925.6" cy="507.8" rx="2.9" ry="3.6"/><ellipse cx="928.6" cy="506.1" rx="2.9" ry="3.6"/><ellipse cx="931.8" cy="506.3" rx="2.9" ry="3.6"/><ellipse cx="935.9" cy="505.2" rx="2.9" ry="3.6"/><ellipse cx="940.7" cy="507.2" rx="2.9" ry="3.6"/><ellipse cx="947.2" cy="505.4" rx="2.9" ry="3.6"/><ellipse cx="950.5" cy="507.5" rx="2.9" ry="3.6"/><ellipse cx="954.2" cy="506.6" rx="2.9" ry="3.6"/><ellipse cx="958.6" cy="507.4" rx="2.9" ry="3.6"/><ellipse cx="961.2" cy="506.0" rx="2.9" ry="3.6"/><ellipse cx="966.1" cy="505.4" rx="2.9" ry="3.6"/><ellipse cx="968.5" cy="505.5" rx="2.9" ry="3.6"/><ellipse cx="970.1" cy="505.7" rx="2.9" ry="3.6"/><ellipse cx="973.7" cy="506.7" rx="2.9" ry="3.6"/><ellipse cx="976.1" cy="506.2" rx="2.9" ry="3.6"/><ellipse cx="981.0" cy="507.7" rx="2.9" ry="3.6"/><ellipse cx="984.4" cy="506.7" rx="2.9" ry="3.6"/><ellipse cx="986.9" cy="507.5" rx="2.9" ry="3.6"/><ellipse cx="992.4" cy="507.3" rx="2.9" ry="3.6"/><ellipse cx="994.9" cy="505.3" rx="2.9" ry="3.6"/><ellipse cx="997.6" cy="505.2" rx="2.9" ry="3.6"/><ellipse cx="1001.4" cy="506.0" rx="2.9" ry="3.6"/><ellipse cx="1004.6" cy="505.4" rx="2.9" ry="3.6"/><ellipse cx="1009.1" cy="505.1" rx="2.9" ry="3.6"/><ellipse cx="1013.2" cy="505.4" rx="2.9" ry="3.6"/><ellipse cx="1016.1" cy="506.0" rx="2.9" ry="3.6"/><ellipse cx="1020.9" cy="507.8" rx="2.9" ry="3.6"/><ellipse cx="1023.6" cy="505.3" rx="2.9" ry="3.6"/><ellipse cx="1026.8" cy="505.8" rx="2.9" ry="3.6"/><ellipse cx="1030.0" cy="505.1" rx="2.9" ry="3.6"/><ellipse cx="1034.4" cy="505.4" rx="2.9" ry="3.6"/><ellipse cx="1036.8" cy="506.5" rx="2.9" ry="3.6"/><ellipse cx="1042.4" cy="507.0" rx="2.9" ry="3.6"/><ellipse cx="1044.7" cy="505.5" rx="2.9" ry="3.6"/><ellipse cx="1048.6" cy="507.2" rx="2.9" ry="3.6"/><ellipse cx="907.7" cy="506.4" rx="2.9" ry="3.6"/><ellipse cx="1056.8" cy="505.6" rx="2.9" ry="3.6"/><ellipse cx="1060.9" cy="507.2" rx="2.9" ry="3.6"/><ellipse cx="1069.9" cy="508.1" rx="2.9" ry="3.6"/><ellipse cx="1083.0" cy="506.4" rx="2.9" ry="3.6"/><ellipse cx="938.2" cy="499.1" rx="2.9" ry="3.6"/><ellipse cx="962.0" cy="495.0" rx="2.9" ry="3.6"/><ellipse cx="962.0" cy="499.1" rx="2.9" ry="3.6"/><ellipse cx="974.2" cy="497.4" rx="2.9" ry="3.6"/><ellipse cx="985.7" cy="495.0" rx="2.9" ry="3.6"/><ellipse cx="997.9" cy="495.0" rx="2.9" ry="3.6"/><ellipse cx="1006.1" cy="496.6" rx="2.9" ry="3.6"/><ellipse cx="1011.0" cy="497.4" rx="2.9" ry="3.6"/><ellipse cx="1022.5" cy="496.6" rx="2.9" ry="3.6"/><ellipse cx="1029.0" cy="495.0" rx="2.9" ry="3.6"/><ellipse cx="1035.5" cy="496.6" rx="2.9" ry="3.6"/><ellipse cx="1051.9" cy="495.8" rx="2.9" ry="3.6"/><ellipse cx="1055.2" cy="500.7" rx="2.9" ry="3.6"/><ellipse cx="1070.7" cy="495.8" rx="2.9" ry="3.6"/><ellipse cx="1073.2" cy="500.7" rx="2.9" ry="3.6"/><ellipse cx="1083.0" cy="495.0" rx="2.9" ry="3.6"/><ellipse cx="1080.5" cy="503.1" rx="2.9" ry="3.6"/><ellipse cx="901.4" cy="483.5" rx="2.9" ry="3.6"/><ellipse cx="906.4" cy="483.5" rx="2.9" ry="3.6"/><ellipse cx="904.7" cy="481.1" rx="2.9" ry="3.6"/><ellipse cx="918.6" cy="481.1" rx="2.9" ry="3.6"/><ellipse cx="922.7" cy="483.5" rx="2.9" ry="3.6"/><ellipse cx="939.1" cy="485.2" rx="2.9" ry="3.6"/><ellipse cx="952.1" cy="478.6" rx="2.9" ry="3.6"/><ellipse cx="952.1" cy="485.2" rx="2.9" ry="3.6"/><ellipse cx="961.1" cy="482.7" rx="2.9" ry="3.6"/><ellipse cx="970.9" cy="483.5" rx="2.9" ry="3.6"/><ellipse cx="976.7" cy="478.6" rx="2.9" ry="3.6"/><ellipse cx="984.8" cy="481.9" rx="2.9" ry="3.6"/><ellipse cx="984.8" cy="485.2" rx="2.9" ry="3.6"/><ellipse cx="988.9" cy="480.3" rx="2.9" ry="3.6"/><ellipse cx="994.7" cy="483.5" rx="2.9" ry="3.6"/><ellipse cx="998.7" cy="484.3" rx="2.9" ry="3.6"/><ellipse cx="1010.2" cy="483.5" rx="2.9" ry="3.6"/><ellipse cx="1015.9" cy="482.7" rx="2.9" ry="3.6"/><ellipse cx="1014.3" cy="485.2" rx="2.9" ry="3.6"/><ellipse cx="1024.1" cy="479.4" rx="2.9" ry="3.6"/><ellipse cx="1040.1" cy="484.3" rx="2.9" ry="3.6"/><ellipse cx="1053.5" cy="484.3" rx="2.9" ry="3.6"/><ellipse cx="1061.7" cy="483.5" rx="2.9" ry="3.6"/><ellipse cx="1066.6" cy="481.9" rx="2.9" ry="3.6"/><ellipse cx="1071.5" cy="482.7" rx="2.9" ry="3.6"/><ellipse cx="1080.5" cy="477.0" rx="2.9" ry="3.6"/><ellipse cx="1083.0" cy="482.7" rx="2.9" ry="3.6"/><ellipse cx="919.4" cy="463.1" rx="2.9" ry="3.6"/><ellipse cx="927.6" cy="466.0" rx="2.9" ry="3.6"/><ellipse cx="944.8" cy="466.0" rx="2.9" ry="3.6"/><ellipse cx="960.3" cy="463.1" rx="2.9" ry="3.6"/><ellipse cx="987.3" cy="464.4" rx="2.9" ry="3.6"/><ellipse cx="981.6" cy="466.0" rx="2.9" ry="3.6"/><ellipse cx="1001.7" cy="464.4" rx="2.9" ry="3.6"/><ellipse cx="1020.3" cy="464.4" rx="2.9" ry="3.6"/><ellipse cx="1030.3" cy="464.4" rx="2.9" ry="3.6"/><ellipse cx="1045.4" cy="463.1" rx="2.9" ry="3.6"/><ellipse cx="1078.9" cy="461.4" rx="2.9" ry="3.6"/><ellipse cx="893.3" cy="525.3" rx="2.9" ry="3.6"/><ellipse cx="896.1" cy="524.4" rx="2.9" ry="3.6"/><ellipse cx="901.0" cy="526.2" rx="2.9" ry="3.6"/><ellipse cx="903.8" cy="525.9" rx="2.9" ry="3.6"/><ellipse cx="906.4" cy="524.5" rx="2.9" ry="3.6"/><ellipse cx="926.8" cy="526.6" rx="2.9" ry="3.6"/><ellipse cx="929.2" cy="525.2" rx="2.9" ry="3.6"/><ellipse cx="933.3" cy="527.1" rx="2.9" ry="3.6"/><ellipse cx="937.4" cy="527.8" rx="2.9" ry="3.6"/><ellipse cx="942.3" cy="526.4" rx="2.9" ry="3.6"/><ellipse cx="946.8" cy="527.8" rx="2.9" ry="3.6"/><ellipse cx="948.9" cy="526.2" rx="2.9" ry="3.6"/><ellipse cx="953.0" cy="524.8" rx="2.9" ry="3.6"/><ellipse cx="955.9" cy="524.7" rx="2.9" ry="3.6"/><ellipse cx="961.2" cy="526.5" rx="2.9" ry="3.6"/><ellipse cx="964.2" cy="526.4" rx="2.9" ry="3.6"/><ellipse cx="967.9" cy="526.7" rx="2.9" ry="3.6"/><ellipse cx="971.7" cy="525.5" rx="2.9" ry="3.6"/><ellipse cx="975.5" cy="525.1" rx="2.9" ry="3.6"/><ellipse cx="979.6" cy="525.3" rx="2.9" ry="3.6"/><ellipse cx="983.1" cy="526.2" rx="2.9" ry="3.6"/><ellipse cx="984.8" cy="524.6" rx="2.9" ry="3.6"/><ellipse cx="990.1" cy="524.6" rx="2.9" ry="3.6"/><ellipse cx="994.1" cy="526.0" rx="2.9" ry="3.6"/><ellipse cx="996.7" cy="524.5" rx="2.9" ry="3.6"/><ellipse cx="1004.2" cy="525.6" rx="2.9" ry="3.6"/><ellipse cx="1007.4" cy="526.6" rx="2.9" ry="3.6"/><ellipse cx="1010.5" cy="524.9" rx="2.9" ry="3.6"/><ellipse cx="1014.2" cy="525.8" rx="2.9" ry="3.6"/><ellipse cx="1018.2" cy="524.5" rx="2.9" ry="3.6"/><ellipse cx="1021.7" cy="525.4" rx="2.9" ry="3.6"/><ellipse cx="1026.7" cy="525.3" rx="2.9" ry="3.6"/><ellipse cx="1029.3" cy="525.6" rx="2.9" ry="3.6"/><ellipse cx="1031.8" cy="525.4" rx="2.9" ry="3.6"/><ellipse cx="1035.4" cy="526.4" rx="2.9" ry="3.6"/><ellipse cx="1040.2" cy="526.2" rx="2.9" ry="3.6"/><ellipse cx="1043.5" cy="525.6" rx="2.9" ry="3.6"/><ellipse cx="1048.2" cy="524.4" rx="2.9" ry="3.6"/><ellipse cx="1050.6" cy="524.9" rx="2.9" ry="3.6"/><ellipse cx="1054.8" cy="525.7" rx="2.9" ry="3.6"/><ellipse cx="1058.4" cy="526.3" rx="2.9" ry="3.6"/><ellipse cx="1063.3" cy="526.7" rx="2.9" ry="3.6"/><ellipse cx="1066.9" cy="525.6" rx="2.9" ry="3.6"/><ellipse cx="1070.3" cy="525.4" rx="2.9" ry="3.6"/><ellipse cx="1073.1" cy="526.8" rx="2.9" ry="3.6"/><ellipse cx="1076.4" cy="526.1" rx="2.9" ry="3.6"/><ellipse cx="1083.0" cy="526.6" rx="2.9" ry="3.6"/><ellipse cx="1085.9" cy="525.7" rx="2.9" ry="3.6"/><ellipse cx="1090.0" cy="526.8" rx="2.9" ry="3.6"/><ellipse cx="907.7" cy="535.0" rx="2.9" ry="3.6"/><ellipse cx="917.8" cy="535.0" rx="2.9" ry="3.6"/><ellipse cx="946.4" cy="535.0" rx="2.9" ry="3.6"/><ellipse cx="957.9" cy="535.0" rx="2.9" ry="3.6"/><ellipse cx="973.4" cy="535.0" rx="2.9" ry="3.6"/><ellipse cx="984.8" cy="535.0" rx="2.9" ry="3.6"/><ellipse cx="1020.8" cy="535.0" rx="2.9" ry="3.6"/><ellipse cx="1032.3" cy="535.0" rx="2.9" ry="3.6"/><ellipse cx="1061.7" cy="535.0" rx="2.9" ry="3.6"/><ellipse cx="1042.1" cy="536.7" rx="2.9" ry="3.6"/><ellipse cx="1053.5" cy="535.0" rx="2.9" ry="3.6"/><ellipse cx="902.3" cy="545.5" rx="2.9" ry="3.6"/><ellipse cx="905.0" cy="544.4" rx="2.9" ry="3.6"/><ellipse cx="909.6" cy="543.3" rx="2.9" ry="3.6"/><ellipse cx="922.7" cy="544.9" rx="2.9" ry="3.6"/><ellipse cx="927.2" cy="546.5" rx="2.9" ry="3.6"/><ellipse cx="930.9" cy="546.8" rx="2.9" ry="3.6"/><ellipse cx="935.8" cy="543.1" rx="2.9" ry="3.6"/><ellipse cx="939.8" cy="543.0" rx="2.9" ry="3.6"/><ellipse cx="944.1" cy="543.2" rx="2.9" ry="3.6"/><ellipse cx="946.3" cy="544.0" rx="2.9" ry="3.6"/><ellipse cx="951.0" cy="543.1" rx="2.9" ry="3.6"/><ellipse cx="953.8" cy="543.6" rx="2.9" ry="3.6"/><ellipse cx="956.9" cy="544.7" rx="2.9" ry="3.6"/><ellipse cx="964.4" cy="542.7" rx="2.9" ry="3.6"/><ellipse cx="968.5" cy="544.1" rx="2.9" ry="3.6"/><ellipse cx="972.9" cy="544.8" rx="2.9" ry="3.6"/><ellipse cx="974.4" cy="543.4" rx="2.9" ry="3.6"/><ellipse cx="982.0" cy="543.0" rx="2.9" ry="3.6"/><ellipse cx="987.1" cy="544.9" rx="2.9" ry="3.6"/><ellipse cx="988.9" cy="545.2" rx="2.9" ry="3.6"/><ellipse cx="993.8" cy="542.9" rx="2.9" ry="3.6"/><ellipse cx="997.4" cy="543.8" rx="2.9" ry="3.6"/><ellipse cx="1001.6" cy="544.4" rx="2.9" ry="3.6"/><ellipse cx="1003.1" cy="545.0" rx="2.9" ry="3.6"/><ellipse cx="1008.6" cy="543.9" rx="2.9" ry="3.6"/><ellipse cx="1011.5" cy="545.2" rx="2.9" ry="3.6"/><ellipse cx="1014.0" cy="544.1" rx="2.9" ry="3.6"/><ellipse cx="1017.6" cy="543.1" rx="2.9" ry="3.6"/><ellipse cx="1021.4" cy="543.5" rx="2.9" ry="3.6"/><ellipse cx="1025.7" cy="543.5" rx="2.9" ry="3.6"/><ellipse cx="1029.0" cy="543.9" rx="2.9" ry="3.6"/><ellipse cx="1032.7" cy="542.3" rx="2.9" ry="3.6"/><ellipse cx="1035.2" cy="542.5" rx="2.9" ry="3.6"/><ellipse cx="1043.8" cy="542.3" rx="2.9" ry="3.6"/><ellipse cx="1048.4" cy="542.1" rx="2.9" ry="3.6"/><ellipse cx="1050.9" cy="543.2" rx="2.9" ry="3.6"/><ellipse cx="1054.5" cy="543.2" rx="2.9" ry="3.6"/><ellipse cx="1058.4" cy="543.7" rx="2.9" ry="3.6"/><ellipse cx="1069.9" cy="547.0" rx="2.9" ry="3.6"/><ellipse cx="1074.0" cy="546.2" rx="2.9" ry="3.6"/><ellipse cx="1076.4" cy="545.2" rx="2.9" ry="3.6"/><ellipse cx="1079.1" cy="544.5" rx="2.9" ry="3.6"/><ellipse cx="1082.7" cy="544.7" rx="2.9" ry="3.6"/><ellipse cx="1087.5" cy="546.7" rx="2.9" ry="3.6"/><ellipse cx="1090.0" cy="546.1" rx="2.9" ry="3.6"/><ellipse cx="906.4" cy="553.8" rx="2.9" ry="3.6"/><ellipse cx="917.0" cy="558.7" rx="2.9" ry="3.6"/><ellipse cx="939.1" cy="558.7" rx="2.9" ry="3.6"/><ellipse cx="957.9" cy="554.7" rx="2.9" ry="3.6"/><ellipse cx="968.5" cy="554.9" rx="2.9" ry="3.6"/><ellipse cx="971.7" cy="555.4" rx="2.9" ry="3.6"/><ellipse cx="975.7" cy="554.8" rx="2.9" ry="3.6"/><ellipse cx="980.7" cy="555.6" rx="2.9" ry="3.6"/><ellipse cx="983.2" cy="554.8" rx="2.9" ry="3.6"/><ellipse cx="991.4" cy="556.8" rx="2.9" ry="3.6"/><ellipse cx="994.3" cy="554.1" rx="2.9" ry="3.6"/><ellipse cx="997.9" cy="555.5" rx="2.9" ry="3.6"/><ellipse cx="1001.2" cy="554.1" rx="2.9" ry="3.6"/><ellipse cx="1004.5" cy="554.8" rx="2.9" ry="3.6"/><ellipse cx="1014.3" cy="554.3" rx="2.9" ry="3.6"/><ellipse cx="1016.5" cy="554.1" rx="2.9" ry="3.6"/><ellipse cx="1020.8" cy="554.9" rx="2.9" ry="3.6"/><ellipse cx="1042.1" cy="554.7" rx="2.9" ry="3.6"/><ellipse cx="1055.2" cy="554.7" rx="2.9" ry="3.6"/><ellipse cx="1061.7" cy="554.7" rx="2.9" ry="3.6"/><ellipse cx="1085.4" cy="554.7" rx="2.9" ry="3.6"/><ellipse cx="923.5" cy="562.9" rx="2.9" ry="3.6"/><ellipse cx="927.0" cy="564.4" rx="2.9" ry="3.6"/><ellipse cx="930.9" cy="564.7" rx="2.9" ry="3.6"/><ellipse cx="933.4" cy="565.0" rx="2.9" ry="3.6"/><ellipse cx="937.8" cy="564.1" rx="2.9" ry="3.6"/><ellipse cx="940.7" cy="562.4" rx="2.9" ry="3.6"/><ellipse cx="946.4" cy="565.4" rx="2.9" ry="3.6"/><ellipse cx="950.5" cy="565.1" rx="2.9" ry="3.6"/><ellipse cx="953.0" cy="564.5" rx="2.9" ry="3.6"/><ellipse cx="958.5" cy="565.3" rx="2.9" ry="3.6"/><ellipse cx="961.6" cy="565.6" rx="2.9" ry="3.6"/><ellipse cx="965.6" cy="563.7" rx="2.9" ry="3.6"/><ellipse cx="972.3" cy="563.4" rx="2.9" ry="3.6"/><ellipse cx="976.5" cy="564.8" rx="2.9" ry="3.6"/><ellipse cx="980.6" cy="564.4" rx="2.9" ry="3.6"/><ellipse cx="988.2" cy="564.5" rx="2.9" ry="3.6"/><ellipse cx="991.4" cy="564.6" rx="2.9" ry="3.6"/><ellipse cx="996.3" cy="564.9" rx="2.9" ry="3.6"/><ellipse cx="1001.0" cy="563.8" rx="2.9" ry="3.6"/><ellipse cx="1004.5" cy="563.3" rx="2.9" ry="3.6"/><ellipse cx="1007.7" cy="563.8" rx="2.9" ry="3.6"/><ellipse cx="1010.8" cy="565.1" rx="2.9" ry="3.6"/><ellipse cx="1015.2" cy="564.1" rx="2.9" ry="3.6"/><ellipse cx="1019.4" cy="565.2" rx="2.9" ry="3.6"/><ellipse cx="1023.0" cy="563.3" rx="2.9" ry="3.6"/><ellipse cx="1025.8" cy="565.2" rx="2.9" ry="3.6"/><ellipse cx="1030.3" cy="563.1" rx="2.9" ry="3.6"/><ellipse cx="1033.9" cy="563.2" rx="2.9" ry="3.6"/><ellipse cx="1038.8" cy="563.8" rx="2.9" ry="3.6"/><ellipse cx="1042.9" cy="565.0" rx="2.9" ry="3.6"/><ellipse cx="1046.0" cy="564.4" rx="2.9" ry="3.6"/><ellipse cx="1048.7" cy="565.6" rx="2.9" ry="3.6"/><ellipse cx="1054.4" cy="565.7" rx="2.9" ry="3.6"/><ellipse cx="1061.2" cy="565.8" rx="2.9" ry="3.6"/><ellipse cx="1063.4" cy="563.7" rx="2.9" ry="3.6"/><ellipse cx="1066.9" cy="564.7" rx="2.9" ry="3.6"/><ellipse cx="1071.3" cy="565.7" rx="2.9" ry="3.6"/><ellipse cx="1074.8" cy="563.4" rx="2.9" ry="3.6"/><ellipse cx="1078.9" cy="563.7" rx="2.9" ry="3.6"/><ellipse cx="893.3" cy="583.3" rx="2.9" ry="3.6"/><ellipse cx="896.9" cy="583.3" rx="2.9" ry="3.6"/><ellipse cx="900.5" cy="583.3" rx="2.9" ry="3.6"/><ellipse cx="904.1" cy="583.3" rx="2.9" ry="3.6"/><ellipse cx="907.7" cy="583.3" rx="2.9" ry="3.6"/><ellipse cx="911.3" cy="583.3" rx="2.9" ry="3.6"/><ellipse cx="914.9" cy="583.3" rx="2.9" ry="3.6"/><ellipse cx="918.5" cy="583.3" rx="2.9" ry="3.6"/><ellipse cx="922.1" cy="583.3" rx="2.9" ry="3.6"/><ellipse cx="925.7" cy="583.3" rx="2.9" ry="3.6"/><ellipse cx="929.2" cy="583.3" rx="2.9" ry="3.6"/><ellipse cx="932.8" cy="583.3" rx="2.9" ry="3.6"/><ellipse cx="936.4" cy="583.3" rx="2.9" ry="3.6"/><ellipse cx="940.0" cy="583.3" rx="2.9" ry="3.6"/><ellipse cx="943.6" cy="583.3" rx="2.9" ry="3.6"/><ellipse cx="947.2" cy="583.3" rx="2.9" ry="3.6"/><ellipse cx="950.8" cy="583.3" rx="2.9" ry="3.6"/><ellipse cx="954.4" cy="583.3" rx="2.9" ry="3.6"/><ellipse cx="958.0" cy="583.3" rx="2.9" ry="3.6"/><ellipse cx="961.6" cy="583.3" rx="2.9" ry="3.6"/><ellipse cx="965.2" cy="583.3" rx="2.9" ry="3.6"/><ellipse cx="968.8" cy="583.3" rx="2.9" ry="3.6"/><ellipse cx="972.4" cy="583.3" rx="2.9" ry="3.6"/><ellipse cx="976.0" cy="583.3" rx="2.9" ry="3.6"/><ellipse cx="979.6" cy="583.3" rx="2.9" ry="3.6"/><ellipse cx="983.2" cy="583.3" rx="2.9" ry="3.6"/><ellipse cx="986.8" cy="583.3" rx="2.9" ry="3.6"/><ellipse cx="990.4" cy="583.3" rx="2.9" ry="3.6"/><ellipse cx="994.0" cy="583.3" rx="2.9" ry="3.6"/><ellipse cx="997.6" cy="583.3" rx="2.9" ry="3.6"/><ellipse cx="1001.2" cy="583.3" rx="2.9" ry="3.6"/><ellipse cx="1004.8" cy="583.3" rx="2.9" ry="3.6"/><ellipse cx="1008.4" cy="583.3" rx="2.9" ry="3.6"/><ellipse cx="1012.0" cy="583.3" rx="2.9" ry="3.6"/><ellipse cx="1015.6" cy="583.3" rx="2.9" ry="3.6"/><ellipse cx="1019.2" cy="583.3" rx="2.9" ry="3.6"/><ellipse cx="1022.8" cy="583.3" rx="2.9" ry="3.6"/><ellipse cx="1026.4" cy="583.3" rx="2.9" ry="3.6"/><ellipse cx="1030.0" cy="583.3" rx="2.9" ry="3.6"/><ellipse cx="1033.6" cy="583.3" rx="2.9" ry="3.6"/><ellipse cx="1037.2" cy="583.3" rx="2.9" ry="3.6"/><ellipse cx="1040.8" cy="583.3" rx="2.9" ry="3.6"/><ellipse cx="1044.4" cy="583.3" rx="2.9" ry="3.6"/><ellipse cx="1048.0" cy="583.3" rx="2.9" ry="3.6"/><ellipse cx="1051.6" cy="583.3" rx="2.9" ry="3.6"/><ellipse cx="1055.2" cy="583.3" rx="2.9" ry="3.6"/><ellipse cx="1058.8" cy="583.3" rx="2.9" ry="3.6"/><ellipse cx="1062.4" cy="583.3" rx="2.9" ry="3.6"/><ellipse cx="1066.0" cy="583.3" rx="2.9" ry="3.6"/><ellipse cx="1069.6" cy="583.3" rx="2.9" ry="3.6"/><ellipse cx="1073.2" cy="583.3" rx="2.9" ry="3.6"/><ellipse cx="921.1" cy="536.8" rx="2.9" ry="3.6"/><ellipse cx="925.6" cy="536.4" rx="2.9" ry="3.6"/><ellipse cx="929.2" cy="535.8" rx="2.9" ry="3.6"/><ellipse cx="938.9" cy="535.3" rx="2.9" ry="3.6"/><ellipse cx="942.3" cy="535.3" rx="2.9" ry="3.6"/><ellipse cx="945.1" cy="536.6" rx="2.9" ry="3.6"/><ellipse cx="948.9" cy="537.0" rx="2.9" ry="3.6"/><ellipse cx="954.4" cy="535.3" rx="2.9" ry="3.6"/><ellipse cx="956.8" cy="537.3" rx="2.9" ry="3.6"/><ellipse cx="960.3" cy="535.7" rx="2.9" ry="3.6"/><ellipse cx="963.2" cy="534.7" rx="2.9" ry="3.6"/><ellipse cx="967.3" cy="537.1" rx="2.9" ry="3.6"/><ellipse cx="970.9" cy="535.9" rx="2.9" ry="3.6"/><ellipse cx="974.7" cy="537.1" rx="2.9" ry="3.6"/><ellipse cx="979.4" cy="536.2" rx="2.9" ry="3.6"/><ellipse cx="983.3" cy="536.0" rx="2.9" ry="3.6"/><ellipse cx="984.7" cy="536.5" rx="2.9" ry="3.6"/><ellipse cx="990.0" cy="536.3" rx="2.9" ry="3.6"/><ellipse cx="991.9" cy="537.0" rx="2.9" ry="3.6"/><ellipse cx="996.6" cy="535.4" rx="2.9" ry="3.6"/><ellipse cx="1000.8" cy="537.2" rx="2.9" ry="3.6"/><ellipse cx="1004.2" cy="535.3" rx="2.9" ry="3.6"/><ellipse cx="1007.2" cy="534.9" rx="2.9" ry="3.6"/><ellipse cx="1010.3" cy="537.0" rx="2.9" ry="3.6"/><ellipse cx="1013.9" cy="537.0" rx="2.9" ry="3.6"/><ellipse cx="1018.1" cy="534.8" rx="2.9" ry="3.6"/><ellipse cx="1020.8" cy="535.4" rx="2.9" ry="3.6"/><ellipse cx="1024.8" cy="535.2" rx="2.9" ry="3.6"/><ellipse cx="1029.9" cy="536.6" rx="2.9" ry="3.6"/><ellipse cx="1032.4" cy="535.9" rx="2.9" ry="3.6"/><ellipse cx="1035.8" cy="534.6" rx="2.9" ry="3.6"/><ellipse cx="1040.9" cy="534.8" rx="2.9" ry="3.6"/><ellipse cx="1043.7" cy="536.9" rx="2.9" ry="3.6"/><ellipse cx="1046.4" cy="535.2" rx="2.9" ry="3.6"/><ellipse cx="1050.5" cy="537.1" rx="2.9" ry="3.6"/><ellipse cx="1055.1" cy="534.5" rx="2.9" ry="3.6"/><ellipse cx="1062.3" cy="535.8" rx="2.9" ry="3.6"/><ellipse cx="1065.0" cy="536.1" rx="2.9" ry="3.6"/><ellipse cx="958.7" cy="553.3" rx="2.9" ry="3.6"/><ellipse cx="963.4" cy="555.6" rx="2.9" ry="3.6"/><ellipse cx="967.1" cy="554.0" rx="2.9" ry="3.6"/><ellipse cx="968.8" cy="554.7" rx="2.9" ry="3.6"/><ellipse cx="974.3" cy="555.3" rx="2.9" ry="3.6"/><ellipse cx="977.6" cy="554.5" rx="2.9" ry="3.6"/><ellipse cx="979.5" cy="555.5" rx="2.9" ry="3.6"/><ellipse cx="985.2" cy="555.1" rx="2.9" ry="3.6"/><ellipse cx="987.0" cy="554.0" rx="2.9" ry="3.6"/><ellipse cx="992.0" cy="553.6" rx="2.9" ry="3.6"/><ellipse cx="995.2" cy="554.9" rx="2.9" ry="3.6"/><ellipse cx="998.1" cy="554.9" rx="2.9" ry="3.6"/><ellipse cx="1006.0" cy="555.9" rx="2.9" ry="3.6"/><ellipse cx="1010.7" cy="554.6" rx="2.9" ry="3.6"/><ellipse cx="1012.8" cy="556.0" rx="2.9" ry="3.6"/><ellipse cx="1016.6" cy="553.3" rx="2.9" ry="3.6"/><ellipse cx="1021.1" cy="554.4" rx="2.9" ry="3.6"/><ellipse cx="1024.7" cy="555.9" rx="2.9" ry="3.6"/><ellipse cx="1026.9" cy="554.2" rx="2.9" ry="3.6"/><ellipse cx="1032.1" cy="553.8" rx="2.9" ry="3.6"/><ellipse cx="1035.9" cy="554.7" rx="2.9" ry="3.6"/><ellipse cx="1040.1" cy="554.1" rx="2.9" ry="3.6"/><ellipse cx="1041.9" cy="553.9" rx="2.9" ry="3.6"/><ellipse cx="1045.7" cy="555.9" rx="2.9" ry="3.6"/><ellipse cx="1049.1" cy="553.9" rx="2.9" ry="3.6"/><ellipse cx="1053.5" cy="554.4" rx="2.9" ry="3.6"/><ellipse cx="1103.7" cy="462.8" rx="2.9" ry="3.6"/><ellipse cx="1093.4" cy="484.0" rx="2.9" ry="3.6"/><ellipse cx="1115.7" cy="484.0" rx="2.9" ry="3.6"/><ellipse cx="1128.7" cy="485.5" rx="2.9" ry="3.6"/><ellipse cx="1132.0" cy="478.6" rx="2.9" ry="3.6"/><ellipse cx="1145.4" cy="481.1" rx="2.9" ry="3.6"/><ellipse cx="1156.0" cy="484.0" rx="2.9" ry="3.6"/><ellipse cx="1184.7" cy="488.4" rx="2.9" ry="3.6"/><ellipse cx="1194.5" cy="481.1" rx="2.9" ry="3.6"/><ellipse cx="1099.3" cy="499.1" rx="2.9" ry="3.6"/><ellipse cx="1174.8" cy="499.1" rx="2.9" ry="3.6"/><ellipse cx="1196.4" cy="503.6" rx="2.9" ry="3.6"/><ellipse cx="1085.7" cy="506.9" rx="2.9" ry="3.6"/><ellipse cx="1095.9" cy="507.6" rx="2.9" ry="3.6"/><ellipse cx="1115.7" cy="507.6" rx="2.9" ry="3.6"/><ellipse cx="1127.4" cy="506.4" rx="2.9" ry="3.6"/><ellipse cx="1158.5" cy="506.4" rx="2.9" ry="3.6"/><ellipse cx="1165.0" cy="506.4" rx="2.9" ry="3.6"/><ellipse cx="1214.1" cy="506.4" rx="2.9" ry="3.6"/><ellipse cx="1236.2" cy="505.3" rx="2.9" ry="3.6"/><ellipse cx="1275.4" cy="506.4" rx="2.9" ry="3.6"/><ellipse cx="1084.9" cy="526.0" rx="2.9" ry="3.6"/><ellipse cx="1087.9" cy="525.3" rx="2.9" ry="3.6"/><ellipse cx="1093.7" cy="524.5" rx="2.9" ry="3.6"/><ellipse cx="1096.4" cy="524.3" rx="2.9" ry="3.6"/><ellipse cx="1100.4" cy="526.0" rx="2.9" ry="3.6"/><ellipse cx="1109.1" cy="526.0" rx="2.9" ry="3.6"/><ellipse cx="1113.5" cy="524.9" rx="2.9" ry="3.6"/><ellipse cx="1170.3" cy="526.0" rx="2.9" ry="3.6"/><ellipse cx="1181.4" cy="524.9" rx="2.9" ry="3.6"/><ellipse cx="1090.6" cy="535.9" rx="2.9" ry="3.6"/><ellipse cx="1101.6" cy="535.9" rx="2.9" ry="3.6"/><ellipse cx="1112.4" cy="535.9" rx="2.9" ry="3.6"/><ellipse cx="1118.9" cy="535.9" rx="2.9" ry="3.6"/><ellipse cx="1165.0" cy="535.9" rx="2.9" ry="3.6"/><ellipse cx="1104.5" cy="541.6" rx="2.9" ry="3.6"/><ellipse cx="1149.8" cy="541.6" rx="2.9" ry="3.6"/><ellipse cx="1171.6" cy="541.3" rx="2.9" ry="3.6"/><ellipse cx="1168.3" cy="546.0" rx="2.9" ry="3.6"/><ellipse cx="1195.3" cy="541.6" rx="2.9" ry="3.6"/><ellipse cx="1201.0" cy="541.6" rx="2.9" ry="3.6"/><ellipse cx="1214.1" cy="535.9" rx="2.9" ry="3.6"/><ellipse cx="1230.4" cy="544.4" rx="2.9" ry="3.6"/><ellipse cx="1080.0" cy="544.1" rx="2.9" ry="3.6"/><ellipse cx="1084.5" cy="546.4" rx="2.9" ry="3.6"/><ellipse cx="1088.3" cy="546.5" rx="2.9" ry="3.6"/><ellipse cx="1089.9" cy="546.6" rx="2.9" ry="3.6"/><ellipse cx="1093.0" cy="545.8" rx="2.9" ry="3.6"/><ellipse cx="1097.4" cy="544.9" rx="2.9" ry="3.6"/><ellipse cx="1101.3" cy="544.4" rx="2.9" ry="3.6"/><ellipse cx="1089.5" cy="559.6" rx="2.9" ry="3.6"/><ellipse cx="1089.0" cy="554.7" rx="2.9" ry="3.6"/><ellipse cx="1109.4" cy="553.8" rx="2.9" ry="3.6"/><ellipse cx="1108.6" cy="559.6" rx="2.9" ry="3.6"/><ellipse cx="1103.7" cy="559.6" rx="2.9" ry="3.6"/><ellipse cx="1102.6" cy="565.3" rx="2.9" ry="3.6"/><ellipse cx="1150.6" cy="559.6" rx="2.9" ry="3.6"/><ellipse cx="1170.3" cy="559.6" rx="2.9" ry="3.6"/><ellipse cx="1091.4" cy="583.3" rx="2.9" ry="3.6"/><ellipse cx="1095.0" cy="583.3" rx="2.9" ry="3.6"/><ellipse cx="1098.6" cy="583.3" rx="2.9" ry="3.6"/><ellipse cx="1102.2" cy="583.3" rx="2.9" ry="3.6"/><ellipse cx="1105.8" cy="583.3" rx="2.9" ry="3.6"/><ellipse cx="1109.4" cy="583.3" rx="2.9" ry="3.6"/><ellipse cx="1113.0" cy="583.3" rx="2.9" ry="3.6"/><ellipse cx="1116.6" cy="583.3" rx="2.9" ry="3.6"/><ellipse cx="1120.2" cy="583.3" rx="2.9" ry="3.6"/><ellipse cx="1123.8" cy="583.3" rx="2.9" ry="3.6"/><ellipse cx="1127.4" cy="583.3" rx="2.9" ry="3.6"/><ellipse cx="1158.5" cy="583.3" rx="2.9" ry="3.6"/><ellipse cx="1169.1" cy="583.3" rx="2.9" ry="3.6"/><ellipse cx="1200.2" cy="583.3" rx="2.9" ry="3.6"/><ellipse cx="1206.7" cy="583.3" rx="2.9" ry="3.6"/><ellipse cx="1218.7" cy="583.3" rx="2.9" ry="3.6"/><ellipse cx="1268.9" cy="583.3" rx="2.9" ry="3.6"/><ellipse cx="756.4" cy="601.7" rx="2.9" ry="3.6"/><ellipse cx="802.5" cy="601.7" rx="2.9" ry="3.6"/><ellipse cx="860.8" cy="607.0" rx="2.9" ry="3.6"/><ellipse cx="852.9" cy="612.7" rx="2.9" ry="3.6"/><ellipse cx="863.9" cy="613.0" rx="2.9" ry="3.6"/><ellipse cx="878.3" cy="607.3" rx="2.9" ry="3.6"/><ellipse cx="883.2" cy="607.3" rx="2.9" ry="3.6"/><ellipse cx="892.2" cy="607.3" rx="2.9" ry="3.6"/><ellipse cx="832.1" cy="621.2" rx="2.9" ry="3.6"/><ellipse cx="857.3" cy="621.2" rx="2.9" ry="3.6"/><ellipse cx="869.3" cy="621.2" rx="2.9" ry="3.6"/><ellipse cx="875.0" cy="621.2" rx="2.9" ry="3.6"/><ellipse cx="779.6" cy="639.7" rx="2.9" ry="3.6"/><ellipse cx="806.0" cy="642.1" rx="2.9" ry="3.6"/><ellipse cx="896.6" cy="640.8" rx="2.9" ry="3.6"/><ellipse cx="769.8" cy="660.5" rx="2.9" ry="3.6"/><ellipse cx="793.5" cy="661.8" rx="2.9" ry="3.6"/><ellipse cx="825.6" cy="660.5" rx="2.9" ry="3.6"/><ellipse cx="838.7" cy="660.5" rx="2.9" ry="3.6"/><ellipse cx="843.1" cy="661.8" rx="2.9" ry="3.6"/><ellipse cx="849.6" cy="661.8" rx="2.9" ry="3.6"/><ellipse cx="855.4" cy="660.5" rx="2.9" ry="3.6"/><ellipse cx="858.6" cy="660.5" rx="2.9" ry="3.6"/><ellipse cx="870.6" cy="661.8" rx="2.9" ry="3.6"/><ellipse cx="878.3" cy="660.5" rx="2.9" ry="3.6"/><ellipse cx="884.8" cy="661.8" rx="2.9" ry="3.6"/><ellipse cx="898.2" cy="660.5" rx="2.9" ry="3.6"/><ellipse cx="814.5" cy="699.7" rx="2.9" ry="3.6"/><ellipse cx="921.9" cy="599.9" rx="2.9" ry="3.6"/><ellipse cx="925.1" cy="602.5" rx="2.9" ry="3.6"/><ellipse cx="930.1" cy="600.4" rx="2.9" ry="3.6"/><ellipse cx="932.5" cy="600.9" rx="2.9" ry="3.6"/><ellipse cx="923.5" cy="607.9" rx="2.9" ry="3.6"/><ellipse cx="926.2" cy="605.7" rx="2.9" ry="3.6"/><ellipse cx="929.2" cy="606.9" rx="2.9" ry="3.6"/><ellipse cx="935.8" cy="605.8" rx="2.9" ry="3.6"/><ellipse cx="938.3" cy="605.8" rx="2.9" ry="3.6"/><ellipse cx="942.3" cy="607.3" rx="2.9" ry="3.6"/><ellipse cx="955.4" cy="599.9" rx="2.9" ry="3.6"/><ellipse cx="960.0" cy="602.0" rx="2.9" ry="3.6"/><ellipse cx="966.9" cy="600.0" rx="2.9" ry="3.6"/><ellipse cx="971.8" cy="600.0" rx="2.9" ry="3.6"/><ellipse cx="974.5" cy="602.0" rx="2.9" ry="3.6"/><ellipse cx="977.9" cy="600.6" rx="2.9" ry="3.6"/><ellipse cx="981.9" cy="600.6" rx="2.9" ry="3.6"/><ellipse cx="984.8" cy="601.9" rx="2.9" ry="3.6"/><ellipse cx="986.5" cy="600.7" rx="2.9" ry="3.6"/><ellipse cx="988.8" cy="602.0" rx="2.9" ry="3.6"/><ellipse cx="993.8" cy="602.5" rx="2.9" ry="3.6"/><ellipse cx="1000.4" cy="602.5" rx="2.9" ry="3.6"/><ellipse cx="1003.7" cy="600.6" rx="2.9" ry="3.6"/><ellipse cx="1007.5" cy="602.5" rx="2.9" ry="3.6"/><ellipse cx="1011.0" cy="600.4" rx="2.9" ry="3.6"/><ellipse cx="1012.6" cy="602.1" rx="2.9" ry="3.6"/><ellipse cx="1016.7" cy="602.0" rx="2.9" ry="3.6"/><ellipse cx="1018.8" cy="600.8" rx="2.9" ry="3.6"/><ellipse cx="1023.1" cy="600.1" rx="2.9" ry="3.6"/><ellipse cx="1025.7" cy="600.4" rx="2.9" ry="3.6"/><ellipse cx="1027.4" cy="602.0" rx="2.9" ry="3.6"/><ellipse cx="1029.6" cy="600.0" rx="2.9" ry="3.6"/><ellipse cx="1033.9" cy="601.4" rx="2.9" ry="3.6"/><ellipse cx="1037.2" cy="602.4" rx="2.9" ry="3.6"/><ellipse cx="1041.4" cy="604.3" rx="2.9" ry="3.6"/><ellipse cx="1043.7" cy="602.2" rx="2.9" ry="3.6"/><ellipse cx="1046.2" cy="600.1" rx="2.9" ry="3.6"/><ellipse cx="1049.8" cy="601.8" rx="2.9" ry="3.6"/><ellipse cx="1053.5" cy="601.1" rx="2.9" ry="3.6"/><ellipse cx="1055.2" cy="600.5" rx="2.9" ry="3.6"/><ellipse cx="1060.1" cy="601.0" rx="2.9" ry="3.6"/><ellipse cx="1078.1" cy="601.6" rx="2.9" ry="3.6"/><ellipse cx="1082.2" cy="601.7" rx="2.9" ry="3.6"/><ellipse cx="912.9" cy="612.7" rx="2.9" ry="3.6"/><ellipse cx="927.6" cy="612.7" rx="2.9" ry="3.6"/><ellipse cx="945.6" cy="612.7" rx="2.9" ry="3.6"/><ellipse cx="955.4" cy="613.4" rx="2.9" ry="3.6"/><ellipse cx="959.5" cy="611.6" rx="2.9" ry="3.6"/><ellipse cx="962.3" cy="612.9" rx="2.9" ry="3.6"/><ellipse cx="967.0" cy="611.9" rx="2.9" ry="3.6"/><ellipse cx="969.5" cy="611.7" rx="2.9" ry="3.6"/><ellipse cx="974.0" cy="612.2" rx="2.9" ry="3.6"/><ellipse cx="978.7" cy="612.7" rx="2.9" ry="3.6"/><ellipse cx="981.9" cy="613.1" rx="2.9" ry="3.6"/><ellipse cx="984.8" cy="614.1" rx="2.9" ry="3.6"/><ellipse cx="989.8" cy="611.6" rx="2.9" ry="3.6"/><ellipse cx="994.2" cy="613.7" rx="2.9" ry="3.6"/><ellipse cx="995.9" cy="612.1" rx="2.9" ry="3.6"/><ellipse cx="1000.0" cy="614.0" rx="2.9" ry="3.6"/><ellipse cx="1005.4" cy="612.3" rx="2.9" ry="3.6"/><ellipse cx="1007.9" cy="612.0" rx="2.9" ry="3.6"/><ellipse cx="1012.7" cy="611.6" rx="2.9" ry="3.6"/><ellipse cx="1015.6" cy="611.9" rx="2.9" ry="3.6"/><ellipse cx="1018.1" cy="611.9" rx="2.9" ry="3.6"/><ellipse cx="1022.8" cy="613.1" rx="2.9" ry="3.6"/><ellipse cx="1025.1" cy="612.2" rx="2.9" ry="3.6"/><ellipse cx="1029.1" cy="612.2" rx="2.9" ry="3.6"/><ellipse cx="1034.2" cy="612.8" rx="2.9" ry="3.6"/><ellipse cx="1037.2" cy="611.5" rx="2.9" ry="3.6"/><ellipse cx="1055.2" cy="611.6" rx="2.9" ry="3.6"/><ellipse cx="1058.6" cy="613.1" rx="2.9" ry="3.6"/><ellipse cx="1060.9" cy="613.3" rx="2.9" ry="3.6"/><ellipse cx="1064.5" cy="612.2" rx="2.9" ry="3.6"/><ellipse cx="1068.3" cy="614.0" rx="2.9" ry="3.6"/><ellipse cx="1071.5" cy="612.7" rx="2.9" ry="3.6"/><ellipse cx="1079.7" cy="612.7" rx="2.9" ry="3.6"/><ellipse cx="914.5" cy="620.9" rx="2.9" ry="3.6"/><ellipse cx="922.7" cy="620.9" rx="2.9" ry="3.6"/><ellipse cx="939.9" cy="620.9" rx="2.9" ry="3.6"/><ellipse cx="948.9" cy="620.4" rx="2.9" ry="3.6"/><ellipse cx="952.1" cy="620.6" rx="2.9" ry="3.6"/><ellipse cx="957.1" cy="620.5" rx="2.9" ry="3.6"/><ellipse cx="960.0" cy="620.1" rx="2.9" ry="3.6"/><ellipse cx="966.4" cy="621.8" rx="2.9" ry="3.6"/><ellipse cx="970.1" cy="620.6" rx="2.9" ry="3.6"/><ellipse cx="972.6" cy="622.0" rx="2.9" ry="3.6"/><ellipse cx="975.2" cy="619.5" rx="2.9" ry="3.6"/><ellipse cx="979.8" cy="622.0" rx="2.9" ry="3.6"/><ellipse cx="983.2" cy="620.5" rx="2.9" ry="3.6"/><ellipse cx="985.5" cy="620.3" rx="2.9" ry="3.6"/><ellipse cx="990.8" cy="619.8" rx="2.9" ry="3.6"/><ellipse cx="993.9" cy="622.2" rx="2.9" ry="3.6"/><ellipse cx="995.7" cy="622.1" rx="2.9" ry="3.6"/><ellipse cx="1000.0" cy="619.6" rx="2.9" ry="3.6"/><ellipse cx="1003.2" cy="622.0" rx="2.9" ry="3.6"/><ellipse cx="1006.9" cy="621.2" rx="2.9" ry="3.6"/><ellipse cx="1012.6" cy="621.8" rx="2.9" ry="3.6"/><ellipse cx="1016.8" cy="620.1" rx="2.9" ry="3.6"/><ellipse cx="1020.3" cy="621.8" rx="2.9" ry="3.6"/><ellipse cx="1022.3" cy="620.6" rx="2.9" ry="3.6"/><ellipse cx="1026.1" cy="619.8" rx="2.9" ry="3.6"/><ellipse cx="1030.4" cy="622.0" rx="2.9" ry="3.6"/><ellipse cx="1037.3" cy="619.6" rx="2.9" ry="3.6"/><ellipse cx="1039.2" cy="621.2" rx="2.9" ry="3.6"/><ellipse cx="1043.9" cy="620.3" rx="2.9" ry="3.6"/><ellipse cx="1047.0" cy="620.7" rx="2.9" ry="3.6"/><ellipse cx="1054.3" cy="621.1" rx="2.9" ry="3.6"/><ellipse cx="1058.5" cy="620.7" rx="2.9" ry="3.6"/><ellipse cx="1060.7" cy="621.2" rx="2.9" ry="3.6"/><ellipse cx="1064.9" cy="621.6" rx="2.9" ry="3.6"/><ellipse cx="1069.2" cy="620.0" rx="2.9" ry="3.6"/><ellipse cx="1072.1" cy="619.8" rx="2.9" ry="3.6"/><ellipse cx="1075.8" cy="620.7" rx="2.9" ry="3.6"/><ellipse cx="1080.5" cy="620.9" rx="2.9" ry="3.6"/><ellipse cx="1086.2" cy="620.9" rx="2.9" ry="3.6"/><ellipse cx="921.9" cy="640.8" rx="2.9" ry="3.6"/><ellipse cx="936.1" cy="642.1" rx="2.9" ry="3.6"/><ellipse cx="944.8" cy="642.1" rx="2.9" ry="3.6"/><ellipse cx="949.7" cy="637.9" rx="2.9" ry="3.6"/><ellipse cx="952.4" cy="639.9" rx="2.9" ry="3.6"/><ellipse cx="957.0" cy="640.0" rx="2.9" ry="3.6"/><ellipse cx="964.4" cy="639.2" rx="2.9" ry="3.6"/><ellipse cx="986.5" cy="640.5" rx="2.9" ry="3.6"/><ellipse cx="990.0" cy="640.2" rx="2.9" ry="3.6"/><ellipse cx="992.7" cy="641.5" rx="2.9" ry="3.6"/><ellipse cx="997.7" cy="641.4" rx="2.9" ry="3.6"/><ellipse cx="1001.8" cy="640.5" rx="2.9" ry="3.6"/><ellipse cx="1005.2" cy="639.6" rx="2.9" ry="3.6"/><ellipse cx="1007.7" cy="641.3" rx="2.9" ry="3.6"/><ellipse cx="1011.8" cy="641.7" rx="2.9" ry="3.6"/><ellipse cx="1015.2" cy="641.2" rx="2.9" ry="3.6"/><ellipse cx="1020.1" cy="639.9" rx="2.9" ry="3.6"/><ellipse cx="1022.0" cy="640.5" rx="2.9" ry="3.6"/><ellipse cx="1025.8" cy="639.8" rx="2.9" ry="3.6"/><ellipse cx="1029.8" cy="639.2" rx="2.9" ry="3.6"/><ellipse cx="1033.9" cy="639.6" rx="2.9" ry="3.6"/><ellipse cx="1041.3" cy="639.6" rx="2.9" ry="3.6"/><ellipse cx="1045.8" cy="641.6" rx="2.9" ry="3.6"/><ellipse cx="1050.1" cy="639.4" rx="2.9" ry="3.6"/><ellipse cx="1053.5" cy="640.6" rx="2.9" ry="3.6"/><ellipse cx="1066.3" cy="640.8" rx="2.9" ry="3.6"/><ellipse cx="912.9" cy="660.9" rx="2.9" ry="3.6"/><ellipse cx="920.7" cy="660.5" rx="2.9" ry="3.6"/><ellipse cx="928.4" cy="660.5" rx="2.9" ry="3.6"/><ellipse cx="933.3" cy="660.8" rx="2.9" ry="3.6"/><ellipse cx="937.9" cy="660.6" rx="2.9" ry="3.6"/><ellipse cx="941.7" cy="659.4" rx="2.9" ry="3.6"/><ellipse cx="944.8" cy="660.2" rx="2.9" ry="3.6"/><ellipse cx="947.6" cy="661.8" rx="2.9" ry="3.6"/><ellipse cx="951.6" cy="661.2" rx="2.9" ry="3.6"/><ellipse cx="954.9" cy="661.1" rx="2.9" ry="3.6"/><ellipse cx="962.5" cy="660.8" rx="2.9" ry="3.6"/><ellipse cx="967.0" cy="660.9" rx="2.9" ry="3.6"/><ellipse cx="969.3" cy="659.2" rx="2.9" ry="3.6"/><ellipse cx="974.2" cy="659.5" rx="2.9" ry="3.6"/><ellipse cx="982.4" cy="660.8" rx="2.9" ry="3.6"/><ellipse cx="986.1" cy="661.6" rx="2.9" ry="3.6"/><ellipse cx="989.1" cy="660.9" rx="2.9" ry="3.6"/><ellipse cx="999.8" cy="660.1" rx="2.9" ry="3.6"/><ellipse cx="1004.7" cy="660.7" rx="2.9" ry="3.6"/><ellipse cx="1008.4" cy="660.4" rx="2.9" ry="3.6"/><ellipse cx="1012.9" cy="659.7" rx="2.9" ry="3.6"/><ellipse cx="1014.5" cy="660.8" rx="2.9" ry="3.6"/><ellipse cx="1019.2" cy="661.5" rx="2.9" ry="3.6"/><ellipse cx="1024.1" cy="660.9" rx="2.9" ry="3.6"/><ellipse cx="1027.1" cy="658.8" rx="2.9" ry="3.6"/><ellipse cx="1031.3" cy="659.7" rx="2.9" ry="3.6"/><ellipse cx="1034.7" cy="660.5" rx="2.9" ry="3.6"/><ellipse cx="1042.1" cy="660.3" rx="2.9" ry="3.6"/><ellipse cx="1046.1" cy="659.8" rx="2.9" ry="3.6"/><ellipse cx="1047.9" cy="660.5" rx="2.9" ry="3.6"/><ellipse cx="1051.8" cy="659.2" rx="2.9" ry="3.6"/><ellipse cx="1054.7" cy="660.6" rx="2.9" ry="3.6"/><ellipse cx="1058.4" cy="659.6" rx="2.9" ry="3.6"/><ellipse cx="1062.7" cy="660.9" rx="2.9" ry="3.6"/><ellipse cx="1065.3" cy="659.9" rx="2.9" ry="3.6"/><ellipse cx="1068.5" cy="661.5" rx="2.9" ry="3.6"/><ellipse cx="1073.5" cy="659.1" rx="2.9" ry="3.6"/><ellipse cx="1076.4" cy="661.4" rx="2.9" ry="3.6"/><ellipse cx="1089.5" cy="660.9" rx="2.9" ry="3.6"/><ellipse cx="924.0" cy="701.0" rx="2.9" ry="3.6"/><ellipse cx="945.1" cy="698.1" rx="2.9" ry="3.6"/><ellipse cx="978.6" cy="698.1" rx="2.9" ry="3.6"/><ellipse cx="1043.4" cy="699.4" rx="2.9" ry="3.6"/><ellipse cx="1098.3" cy="601.7" rx="2.9" ry="3.6"/><ellipse cx="1108.1" cy="601.7" rx="2.9" ry="3.6"/><ellipse cx="1121.2" cy="601.7" rx="2.9" ry="3.6"/><ellipse cx="1162.9" cy="601.7" rx="2.9" ry="3.6"/><ellipse cx="1182.5" cy="601.7" rx="2.9" ry="3.6"/><ellipse cx="1097.2" cy="613.0" rx="2.9" ry="3.6"/><ellipse cx="1105.8" cy="621.2" rx="2.9" ry="3.6"/><ellipse cx="1111.4" cy="621.2" rx="2.9" ry="3.6"/><ellipse cx="1133.1" cy="621.2" rx="2.9" ry="3.6"/><ellipse cx="1092.3" cy="661.8" rx="2.9" ry="3.6"/><ellipse cx="1097.2" cy="660.5" rx="2.9" ry="3.6"/><ellipse cx="1123.3" cy="661.8" rx="2.9" ry="3.6"/><ellipse cx="1132.0" cy="661.8" rx="2.9" ry="3.6"/><ellipse cx="1168.3" cy="661.8" rx="2.9" ry="3.6"/><ellipse cx="1181.4" cy="661.8" rx="2.9" ry="3.6"/><ellipse cx="1268.4" cy="656.5" rx="2.9" ry="3.6"/><ellipse cx="1348.0" cy="433.6" rx="2.9" ry="3.6"/><ellipse cx="1368.6" cy="478.4" rx="2.9" ry="3.6"/><ellipse cx="1437.6" cy="479.8" rx="2.9" ry="3.6"/><ellipse cx="1314.2" cy="639.7" rx="2.9" ry="3.6"/></g><ellipse cx="1268.4" cy="657" rx="2.9" ry="3.6" fill="#264478"/><line x1="1251" y1="706" x2="1288" y2="706" stroke="#f00000" stroke-width="3"/><text x="1290" y="666" stroke="#595959" stroke-width="0.6" font-family='"Liberation Sans", sans-serif' font-size="25" fill="#595959" textLength="200" lengthAdjust="spacingAndGlyphs">Ln(rendement hebdo)</text><text x="1290" y="715" stroke="#595959" stroke-width="0.6" font-family='"Liberation Sans", sans-serif' font-size="25" fill="#595959" textLength="311" lengthAdjust="spacingAndGlyphs">Regression linéaire (actif vs index)</text><path d="M0.5 0.5H1697.5V855.5H0.5Z" fill="none" stroke="#7f7f7f" stroke-width="1"/></svg></body></html>
